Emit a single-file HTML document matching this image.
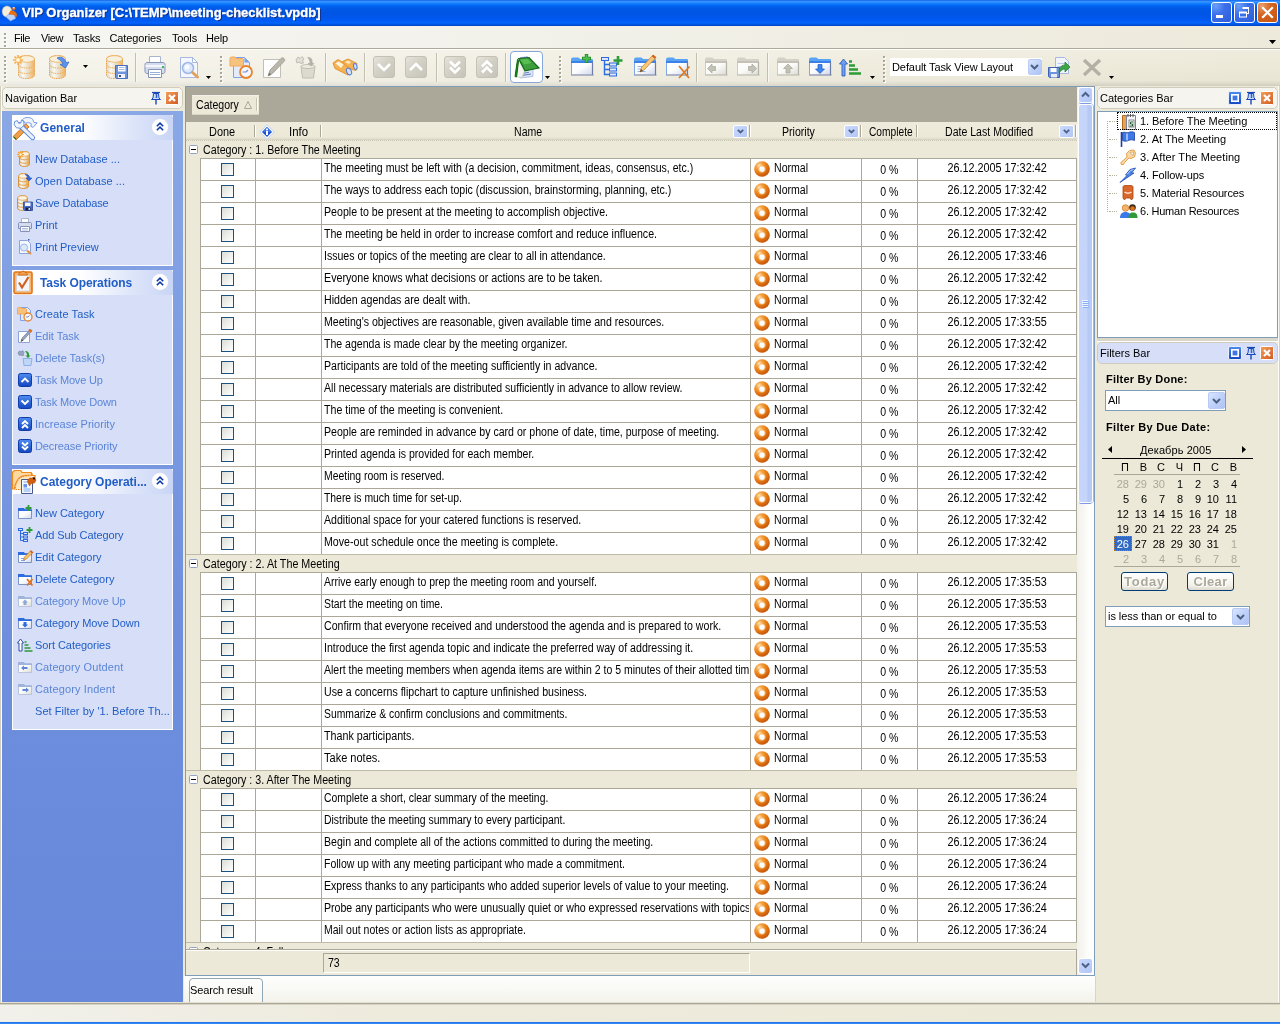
<!DOCTYPE html>
<html><head><meta charset="utf-8"><title>VIP Organizer</title>
<style>
html,body{margin:0;padding:0;}
body{width:1280px;height:1024px;overflow:hidden;position:relative;background:#ECE9D8;font-family:"Liberation Sans",sans-serif;font-size:11px;color:#000;}
*,*:before,*:after{box-sizing:border-box;}
#all{position:absolute;left:0;top:0;width:1280px;height:1024px;will-change:transform;}
.abs{position:absolute;}
svg{display:block;position:absolute;overflow:visible;}
b{font-weight:bold;}

/* ---------- title bar ---------- */
#title{position:absolute;left:0;top:0;width:1280px;height:26px;
 background:linear-gradient(to bottom,#0A5FE8 0%,#3A93FF 5%,#2B8DFF 9%,#1580FF 13%,#0470FC 18%,#0262EE 24%,#0058E6 34%,#0055E4 50%,#0056EB 68%,#005CF5 80%,#0264FB 88%,#0152DC 95%,#0044C4 100%);}
#title .cap{position:absolute;left:22px;top:5px;font-size:13px;font-weight:bold;color:#fff;text-shadow:1px 1px 0 #0A2A80;white-space:nowrap;-webkit-text-stroke:.35px #fff;}
.tbtn{position:absolute;top:2px;width:21px;height:21px;border:1px solid #fff;border-radius:3px;
 background:radial-gradient(circle at 20% 15%,#6AA0FA 0%,#3C70EA 40%,#2C5CD8 100%);}
.tbtn.close{background:radial-gradient(circle at 20% 15%,#E8A070 0%,#D4641E 40%,#C4560E 100%);}

/* ---------- menu ---------- */
#menu{position:absolute;left:0;top:26px;width:1280px;height:24px;background:linear-gradient(to right,#F6F6F4 0%,#F2F1EA 40%,#EDEADB 100%);border-bottom:1px solid #fff;}
#menu:after{content:"";position:absolute;left:0;top:22px;width:1280px;height:1px;background:#ADAA9A;}
#menu span{position:absolute;top:6px;font-size:11px;white-space:nowrap;}

/* ---------- toolbar ---------- */
#tool{position:absolute;left:0;top:50px;width:1280px;height:36px;background:linear-gradient(to right,rgba(255,255,255,.5) 0%,rgba(255,255,255,.25) 50%,rgba(255,255,255,0) 100%),linear-gradient(to bottom,#EFECDE 0%,#ECE9D8 45%,#E8E5D4 85%,#DCD9C9 93%,#D0CDBE 100%);}
.tsep{position:absolute;top:3px;width:2px;height:29px;border-left:1px solid #C2BFAF;border-right:1px solid #F8F7F2;}

/* ---------- generic panel header ---------- */
.phead{position:absolute;height:22px;font-size:11px;}
.phead span{position:absolute;left:3px;top:5px;white-space:nowrap;}

/* ---------- nav ---------- */
#nav{position:absolute;left:2px;top:111px;width:181px;height:891px;background:linear-gradient(to bottom,#8AA7E5 0%,#7E9EE3 25%,#7090DE 55%,#6A8ADC 80%,#6888DB 100%);}
.ngrp{position:absolute;left:10px;width:161px;background:#D6DFF7;border:1px solid #fff;border-top:none;}
.nhead{position:absolute;left:-1px;top:0;width:161px;height:25px;border-radius:3px 3px 0 0;background:linear-gradient(to right,#fff 0%,#fff 42%,#F2F5FD 55%,#DDE5F9 75%,#C9D5F6 100%);}
.nhead b{position:absolute;left:28px;top:6px;font-size:12px;color:#215DC6;white-space:nowrap;}
.nitem{position:absolute;left:22px;font-size:11px;color:#215DC6;white-space:nowrap;}
.nitem.dis{color:#5B84D8;}

/* ---------- grid ---------- */
#gridwrap{position:absolute;left:185px;top:86px;width:910px;height:890px;border:1px solid #7F9DB9;background:#ECE9D8;}
#gby{position:absolute;left:0;top:0;width:891px;height:35px;background:#ACA899;}
.chip{position:absolute;left:6px;top:8px;width:67px;height:20px;background:#ECE9D8;border-bottom:1px solid #D8D4C4;border-top:1px solid #F4F2E8;}
.chip:after{content:"";position:absolute;right:1px;top:2px;width:2px;height:13px;border-left:1px solid #C5C2B2;border-right:1px solid #fff;}
#ghead{position:absolute;left:0;top:35px;width:891px;height:18px;background:linear-gradient(to bottom,#EEEBDC 0,#ECE9D8 15px,#E6E3D2 16px,#DDD9C8 17px,#D6D2C1 18px);}
.hc{position:absolute;top:0;height:18px;white-space:nowrap;}
.hc:after{content:"";position:absolute;right:0;top:3px;width:2px;height:12px;border-left:1px solid #ACA899;border-right:1px solid #fff;}
.hc s,.chip s,.grow s,#gfoot s{position:absolute;text-decoration:none;font-size:12px;white-space:nowrap;transform:scaleX(.88);transform-origin:0 50%;}
#gbody{position:absolute;left:0;top:53px;width:891px;height:809px;overflow:hidden;background:#ECE9D8;}
.grow{position:absolute;left:0;width:891px;height:18px;border-top:1px solid #BFBBA9;background:#ECE9D8;}
.grow.first{border-top:1px dotted #C9C5B4;}
.grow s{left:17px;top:2px;}
.row{position:absolute;left:14px;width:877px;height:22px;border-top:1px solid #ACA899;border-left:1px solid #ACA899;border-right:1px solid #ACA899;background:#fff;}
.row .c{position:absolute;top:0;height:21px;line-height:19px;white-space:nowrap;overflow:hidden;border-left:1px solid #ACA899;}
.row:before{content:"";position:absolute;left:54px;top:0;width:1px;height:21px;background:#ACA899;}
.row s{display:inline-block;text-decoration:none;font-size:12px;transform:scaleX(.88);transform-origin:0 50%;}
.cp s,.dt s{transform-origin:50% 50%;}
.cb{position:absolute;left:20px;top:4px;width:13px;height:13px;border:1px solid #1C5180;background:linear-gradient(135deg,#DCDCD7 0%,#EEEEEA 50%,#fff 100%);}
.nm{left:120px;width:428px;padding-left:2px;}
.pr{left:549px;width:111px;padding-left:23px;}
.cp{left:660px;width:56px;text-align:center;padding-top:2px;}
.dt{left:716px;width:159px;text-align:center;}
#gfoot{position:absolute;left:0;top:862px;width:891px;height:26px;background:#ECE9D8;border-top:1px solid #ACA899;border-right:1px solid #ACA899;box-shadow:0 1px 0 #fff inset;}
#gfoot .cnt{position:absolute;left:137px;top:3px;width:427px;height:20px;border:1px solid #ACA899;border-right-color:#fff;border-bottom-color:#fff;}
#gfoot s{left:4px;top:2px;}
#vsb{position:absolute;left:891px;top:0;width:17px;height:888px;background:linear-gradient(to right,#F3F1EC 0%,#F7F6F2 35%,#FEFEFC 70%,#fff 100%);}
.sbtn{position:absolute;left:1px;width:15px;height:16px;border:1px solid #fff;border-radius:3px;background:linear-gradient(135deg,#C9D8FC 0%,#BCCEF9 55%,#B2C6F5 100%);}
.sshd{position:absolute;left:2px;width:13px;height:2px;border-bottom:1px solid #7C9BE0;border-radius:0 0 3px 3px;}
#vsb .thumb{position:absolute;left:1px;top:17px;width:15px;height:399px;border-radius:3px;border:1px solid #fff;background:linear-gradient(to right,#C6D6FB 0%,#C4D4FA 60%,#B7CAF6 68%,#B7CAF6 100%);box-shadow:1px 0 0 #9FB8EE;}
#gtabs{position:absolute;left:184px;top:976px;width:912px;height:27px;background:linear-gradient(to bottom,#FEFEFD 0%,#FAFAF7 40%,#F3F2EA 100%);border-right:1px solid #D8D5C8;overflow:hidden;}
.tab{position:absolute;left:5px;top:2px;width:74px;height:30px;border:1px solid #91A7B4;border-radius:4px 4px 0 0;background:linear-gradient(to bottom,#FDFDFC,#F6F5F0);white-space:nowrap;}
.tab span{position:absolute;left:0;top:5px;}

/* ---------- right ---------- */
#cattree{position:absolute;left:1097px;top:111px;width:181px;height:227px;background:#fff;border:1px solid #7F9DB9;}
.ct{white-space:nowrap;}
#filt{position:absolute;left:1097px;top:364px;width:182px;height:639px;}
.fcombo{background:#fff;border:1px solid #7F9DB9;}
.fcombo span{position:absolute;left:2px;top:3px;white-space:nowrap;}
.cd{width:17px;text-align:right;white-space:nowrap;}
.cd.g{color:#ACA899;}
.cd.sel{color:#fff;}
.selbox{width:18px;height:15px;background:#316AC5;border:1px dotted #C97A1A;}
.fbtn{width:47px;height:19px;border:1px solid #003C74;border-radius:3px;background:linear-gradient(to bottom,#fff,#F3F2EC 70%,#DDD9CE);font-weight:bold;font-size:13px;text-align:center;line-height:16px;padding-top:1px;color:#ACA899;text-shadow:1px 1px 0 #fff;white-space:nowrap;}

/* ---------- status ---------- */
#edge{position:absolute;left:0;top:1002px;width:1280px;height:3px;background:linear-gradient(to bottom,#E4E1D2 0,#E4E1D2 1px,#A9A696 1px,#A9A696 2px,#D6D3C4 2px,#D6D3C4 3px);}
#status{position:absolute;left:0;top:1005px;width:1280px;height:17px;background:linear-gradient(to right,#F1F0EA 0%,#EEEBDD 30%,#ECE9D8 100%);}
#desk{position:absolute;left:0;top:1022px;width:1280px;height:2px;background:linear-gradient(to bottom,#1E6AE0,#3A92FF);}

</style></head>
<body>
<div id="all">
<svg width="0" height="0" style="left:0;top:0"><defs>
<linearGradient id="gdb" x1="0" x2="1" y1="0" y2="0"><stop offset="0" stop-color="#DCD7C7"/><stop offset=".28" stop-color="#FAF8F1"/><stop offset=".55" stop-color="#E9E2CF"/><stop offset=".8" stop-color="#F1C88E"/><stop offset="1" stop-color="#EFB164"/></linearGradient>
<linearGradient id="gdbd" x1="0" x2="1" y1="0" y2="0"><stop offset="0" stop-color="#E9B56B"/><stop offset=".4" stop-color="#FBEBCF"/><stop offset="1" stop-color="#C9A870"/></linearGradient>
<linearGradient id="gblue" x1="0" x2="0" y1="0" y2="1"><stop offset="0" stop-color="#4F8DF0"/><stop offset="1" stop-color="#1346C0"/></linearGradient>
<linearGradient id="ggray" x1="0" x2="1" y1="0" y2="1"><stop offset="0" stop-color="#E6E4DC"/><stop offset=".5" stop-color="#D2D0C5"/><stop offset="1" stop-color="#C6C4B8"/></linearGradient>
<linearGradient id="gfold" x1="0" x2="1" y1="0" y2="1"><stop offset="0" stop-color="#FFFFFF"/><stop offset=".5" stop-color="#FBFCFE"/><stop offset="1" stop-color="#D0D8EC"/></linearGradient>
<linearGradient id="gfoldg" x1="0" x2="1" y1="0" y2="1"><stop offset="0" stop-color="#FFFFFF"/><stop offset=".5" stop-color="#FAFAF8"/><stop offset="1" stop-color="#DCDBD4"/></linearGradient>
<radialGradient id="gprio" cx=".33" cy=".28" r=".75"><stop offset="0" stop-color="#FFE6B4"/><stop offset=".3" stop-color="#F4A040"/><stop offset=".55" stop-color="#EC8218"/><stop offset="1" stop-color="#C4560A"/></radialGradient>
<linearGradient id="gorange" x1="0" x2="1" y1="0" y2="1"><stop offset="0" stop-color="#F2A15E"/><stop offset="1" stop-color="#D2581C"/></linearGradient>
<linearGradient id="gcb" x1="0" x2="1" y1="0" y2="1"><stop offset="0" stop-color="#DCDCD7"/><stop offset="1" stop-color="#FFFFFF"/></linearGradient>
</defs></svg><div id="title"><svg style="left:2px;top:5px" width="16" height="16" viewBox="0 0 16 16"><ellipse cx="5" cy="6.500" rx="4.800" ry="5.500" fill="#F3EEDD" stroke="#C9C4B0" stroke-width=".6"/><path d="M4 12l2-2.500h6.500l1 4-5 2.500z" fill="#BBD2FA" stroke="#7FA4E8" stroke-width=".6"/><circle cx="11.800" cy="3.500" r="1.600" fill="#E86E12"/><path d="M10.700 2.800h2.200" stroke="#fff" stroke-width=".9"/><path d="M6.500 9l2-3.500h3l3 2.500.5 3.500-2 .5-1-2.500-1.500 .5-1-1.500-1.500 1.500z" fill="#E86E12"/></svg><div class="cap" style="letter-spacing:-0.007px">VIP Organizer [C:\TEMP\meeting-checklist.vpdb]</div><div class="tbtn" style="left:1211px"><svg style="left:0px;top:0px" width="19" height="19" viewBox="0 0 19 19"><rect x="4" y="12" width="7" height="3" fill="#fff"/></svg></div><div class="tbtn" style="left:1234px"><svg style="left:0px;top:0px" width="19" height="19" viewBox="0 0 19 19"><rect x="7.500" y="4" width="6.500" height="2" fill="#fff"/><rect x="13" y="4" width="1" height="7" fill="#fff"/><rect x="12" y="10" width="2" height="1" fill="#fff"/><rect x="4.500" y="9.500" width="7" height="4.500" fill="none" stroke="#fff"/><rect x="4" y="8.500" width="8" height="2" fill="#fff"/></svg></div><div class="tbtn close" style="left:1257px"><svg style="left:0px;top:0px" width="19" height="19" viewBox="0 0 19 19"><path d="M5 5l9 9M14 5l-9 9" stroke="#fff" stroke-width="2.2" stroke-linecap="square"/></svg></div></div>
<div id="menu"><svg style="left:4px;top:7px" width="3" height="16" viewBox="0 0 3 16"><rect x="1" y="1" width="2" height="2" fill="#fff"/><rect x="0" y="0" width="2" height="2" fill="#A9A696"/><rect x="1" y="5" width="2" height="2" fill="#fff"/><rect x="0" y="4" width="2" height="2" fill="#A9A696"/><rect x="1" y="9" width="2" height="2" fill="#fff"/><rect x="0" y="8" width="2" height="2" fill="#A9A696"/><rect x="1" y="13" width="2" height="2" fill="#fff"/><rect x="0" y="12" width="2" height="2" fill="#A9A696"/></svg><span style="left:14px;letter-spacing:-0.434px">File</span><span style="left:41px;letter-spacing:-0.414px">View</span><span style="left:73px;letter-spacing:-0.145px">Tasks</span><span style="left:109.5px;letter-spacing:-0.12px">Categories</span><span style="left:172px;letter-spacing:-0.138px">Tools</span><span style="left:206px;letter-spacing:-0.156px">Help</span><svg style="left:1269px;top:14px" width="7" height="4" viewBox="0 0 7 4"><path d="M0 0h7l-3.5 4z" fill="#000"/></svg></div>
<div id="tool"><svg style="left:4px;top:6px" width="3" height="28" viewBox="0 0 3 28"><rect x="1" y="1" width="2" height="2" fill="#fff"/><rect x="0" y="0" width="2" height="2" fill="#A9A696"/><rect x="1" y="5" width="2" height="2" fill="#fff"/><rect x="0" y="4" width="2" height="2" fill="#A9A696"/><rect x="1" y="9" width="2" height="2" fill="#fff"/><rect x="0" y="8" width="2" height="2" fill="#A9A696"/><rect x="1" y="13" width="2" height="2" fill="#fff"/><rect x="0" y="12" width="2" height="2" fill="#A9A696"/><rect x="1" y="17" width="2" height="2" fill="#fff"/><rect x="0" y="16" width="2" height="2" fill="#A9A696"/><rect x="1" y="21" width="2" height="2" fill="#fff"/><rect x="0" y="20" width="2" height="2" fill="#A9A696"/><rect x="1" y="25" width="2" height="2" fill="#fff"/><rect x="0" y="24" width="2" height="2" fill="#A9A696"/></svg><div class="abs" style="left:510px;top:1px;width:33px;height:32px;border:1px solid #86A6DC;background:#fff;border-radius:4px"></div><svg style="left:514px;top:5px" width="24" height="24" viewBox="0 0 24 24"><path d="M3.500 15l13.500-2.500 2 1.500v7.500L6 23z" fill="#DCE6FA" stroke="#9FB2DC" stroke-width=".8"/><path d="M8 18.500l7-1.200M8 20.500l9-1.500" stroke="#5570B0" stroke-width=".9"/><path d="M4.500 5L10.500 16 8 22.500 3 22z" fill="#F2F2EE" stroke="#C8C4BC" stroke-width=".6"/><path d="M3.500 4.500L1 21.500l1.500 .5L4.500 6z" fill="#1E8A1E" stroke="#0A6A0A" stroke-width="1"/><path d="M4.500 3.500L15 2.500 25 13 11 15.800z" fill="#3E9E3E" stroke="#0A6A0A" stroke-width="1.100"/><path d="M6 4.500l7.500-.700 4 4.200-7 1.500z" fill="#62C456" opacity=".8"/><path d="M7 2v1.500M9 1.800v1.500M11 1.600v1.500M13 1.400v1.500" stroke="#2040A0" stroke-width=".9"/></svg><svg style="left:13px;top:5px" width="24" height="24" viewBox="0 0 24 24"><g transform="translate(5 0) scale(1.0)"><path d="M.5 4C.5 2 4 .5 8.500 .5s8 1.500 8 3.500V20c0 2-3.500 3.500-8 3.500S.5 22 .5 20z" fill="url(#gdb)" stroke="#E9A550" stroke-width="1" stroke-dasharray="1.500 .7"/><ellipse cx="8.500" cy="4" rx="8" ry="3.300" fill="#F7F0DF" stroke="#EDB060" stroke-width=".8"/><path d="M.5 9.500c0 2 3.500 3.500 8 3.500s8-1.500 8-3.500M.5 15c0 2 3.500 3.500 8 3.500s8-1.500 8-3.500" fill="none" stroke="#EDB060" stroke-width="1" stroke-dasharray="1.500 .7"/></g><path d="M5 0v10M0 5h10M1.500 1.500l7 7M8.500 1.500l-7 7" stroke="#F8B050" stroke-width="1.700"/><circle cx="5" cy="5" r="2" fill="#FFF6DC"/></svg><svg style="left:45px;top:5px" width="24" height="24" viewBox="0 0 24 24"><g transform="translate(4 0) scale(1.0)"><path d="M.5 4C.5 2 4 .5 8.500 .5s8 1.500 8 3.500V20c0 2-3.500 3.500-8 3.500S.5 22 .5 20z" fill="url(#gdb)" stroke="#E9A550" stroke-width="1" stroke-dasharray="1.500 .7"/><ellipse cx="8.500" cy="4" rx="8" ry="3.300" fill="#F7F0DF" stroke="#EDB060" stroke-width=".8"/><path d="M.5 9.500c0 2 3.500 3.500 8 3.500s8-1.500 8-3.500M.5 15c0 2 3.500 3.500 8 3.500s8-1.500 8-3.500" fill="none" stroke="#EDB060" stroke-width="1" stroke-dasharray="1.500 .7"/></g><path d="M12 3c4-2 8 0 9 4.500l3-.500-3.500 6-5.500-3.500 3-.5c-.8-2.500-3-4-6-6z" fill="#5B93EA" stroke="#3468C8" stroke-width=".7"/></svg><svg style="left:103px;top:5px" width="24" height="24" viewBox="0 0 24 24"><g transform="translate(3 0) scale(1.0)"><path d="M.5 4C.5 2 4 .5 8.500 .5s8 1.500 8 3.500V20c0 2-3.500 3.500-8 3.500S.5 22 .5 20z" fill="url(#gdb)" stroke="#E9A550" stroke-width="1" stroke-dasharray="1.500 .7"/><ellipse cx="8.500" cy="4" rx="8" ry="3.300" fill="#F7F0DF" stroke="#EDB060" stroke-width=".8"/><path d="M.5 9.500c0 2 3.500 3.500 8 3.500s8-1.500 8-3.500M.5 15c0 2 3.500 3.500 8 3.500s8-1.500 8-3.500" fill="none" stroke="#EDB060" stroke-width="1" stroke-dasharray="1.500 .7"/></g><path d="M12.500 10.500h12v13h-11l-1-1z" fill="#7094DC" stroke="#4A6CBC"/><rect x="15" y="11" width="7.500" height="5.500" fill="#fff"/><path d="M16 12.500h5.500M16 14.500h5.500" stroke="#A9BCE6"/><rect x="15" y="19" width="7" height="4" fill="#F2F4FA"/><rect x="16" y="20" width="2" height="2" fill="#3D4F84"/></svg><svg style="left:143px;top:5px" width="24" height="24" viewBox="0 0 24 24"><path d="M6.500 1.500h11v7h-11z" fill="#fff" stroke="#A9B4CF"/><path d="M2 9.500c0-1 1-2 2-2h16c1 0 2 1 2 2v7c0 1-1 2-2 2H4c-1 0-2-1-2-2z" fill="#D5DCEE" stroke="#8593B8"/><path d="M2.500 11h19" stroke="#F4F6FB" stroke-width="2"/><path d="M5.500 14.500h13v8h-13z" fill="#fff" stroke="#8593B8"/><path d="M7 17.500h10M7 19.500h10" stroke="#9DB0DC"/><rect x="19" y="11" width="2" height="2" fill="#3FB44A"/></svg><svg style="left:177px;top:5px" width="24" height="24" viewBox="0 0 24 24"><path d="M3.500 2.500h12l5 5v15h-17z" fill="#F4F7FE" stroke="#A9B8E0"/><path d="M15.500 2.500v5h5z" fill="#fff" stroke="#A9B8E0"/><circle cx="11" cy="13" r="5.500" fill="#DCE9FB" stroke="#9DB6E6" stroke-width="1.500"/><circle cx="10" cy="12" r="2.500" fill="#F8FBFF"/><path d="M15.500 17.500l5 4.500" stroke="#E0A060" stroke-width="3" stroke-linecap="round"/></svg><svg style="left:229px;top:5px" width="24" height="24" viewBox="0 0 24 24"><path d="M4.500 2.500h11l5 5v15h-16z" fill="#E4ECFC" stroke="#7FA2E6"/><path d="M15.500 2.500v5h5z" fill="#7FA2E6"/><path d="M1 3.500c0-1 .5-1.500 1.500-1.500H6l1.500 1.500H13c1 0 1.500.5 1.500 1.500v6H1z" fill="#F7C27E" stroke="#F0A95A"/><circle cx="17" cy="17" r="6" fill="#F4F7FF" stroke="#E8842A" stroke-width="1.800"/><path d="M17 17h-3.500M17 17l2-2" stroke="#7A8FC0" stroke-width="1.200"/></svg><svg style="left:262px;top:5px" width="24" height="24" viewBox="0 0 24 24"><path d="M1.500 4.500h17v18h-17z" fill="#fff" stroke="#C2C0B6"/><path d="M6 21l2-6L19 3.500c1-1 2-1 3 0s1 2 0 3L11 18z" fill="#B9B7AB" stroke="#9E9C90" stroke-width=".8"/><path d="M6 21l1.200-3.500 2.300 2.300z" fill="#77756B"/></svg><svg style="left:294px;top:5px" width="24" height="24" viewBox="0 0 24 24"><path d="M7 11.500h14l-1.500 11.500h-11z" fill="#DCDAD0" stroke="#C0BEB2"/><ellipse cx="14" cy="11.500" rx="7" ry="2" fill="#ECEAE2" stroke="#C0BEB2"/><path d="M13 2c4-.5 6 2.500 5.500 6h2l-3.500 3.500-3.500-3.500h2c.3-2.200-.7-4-2.500-6z" fill="#B5B3A8"/><path d="M2 5l2-3 2 1.500 2-2 2 2.500-1.500 2 1 2-3 .5-1-1.500-2.500 1z" fill="#E2E0D8" stroke="#B5B3A8" stroke-width=".8"/></svg><svg style="left:333px;top:5px" width="24" height="24" viewBox="0 0 24 24"><path d="M0 8l5-3.500 13.500 8-3.500 7.500L2 13.500z" fill="#F5B252" stroke="#E08E28" stroke-width=".9"/><path d="M2.500 8.500l3-2 5 3-2.500 3.500z" fill="#FFF3DC"/><path d="M9.500 6.500l5.500-2.500 9 4.500-1 7-4-1-6.500-4z" fill="#F5B252" stroke="#E08E28" stroke-width=".9"/><path d="M12 7l3-1.500 3 1.500-2 2z" fill="#FFE9C4"/><ellipse cx="16" cy="16.500" rx="2.300" ry="3.500" transform="rotate(-25 16 16.500)" fill="#D5E2FA" stroke="#5C82D4" stroke-width="1.100"/><ellipse cx="22.300" cy="11.500" rx="1.700" ry="3" transform="rotate(-15 22.300 11.500)" fill="#D5E2FA" stroke="#5C82D4" stroke-width="1.100"/></svg><svg style="left:372px;top:5px" width="24" height="24" viewBox="0 0 24 24"><rect x="1.500" y="1.500" width="21" height="21" rx="2.500" fill="url(#ggray)" stroke="#C4C2B5"/><path d="M6 9l6 6 6-6" fill="none" stroke="#fff" stroke-width="2.600"/></svg><svg style="left:404px;top:5px" width="24" height="24" viewBox="0 0 24 24"><rect x="1.500" y="1.500" width="21" height="21" rx="2.500" fill="url(#ggray)" stroke="#C4C2B5"/><path d="M6 15l6-6 6 6" fill="none" stroke="#fff" stroke-width="2.600"/></svg><svg style="left:443px;top:5px" width="24" height="24" viewBox="0 0 24 24"><rect x="1.500" y="1.500" width="21" height="21" rx="2.500" fill="url(#ggray)" stroke="#C4C2B5"/><path d="M7 6.500l5 5 5-5M7 12.500l5 5 5-5" fill="none" stroke="#fff" stroke-width="2.600"/></svg><svg style="left:475px;top:5px" width="24" height="24" viewBox="0 0 24 24"><rect x="1.500" y="1.500" width="21" height="21" rx="2.500" fill="url(#ggray)" stroke="#C4C2B5"/><path d="M7 11.500l5-5 5 5M7 17.500l5-5 5 5" fill="none" stroke="#fff" stroke-width="2.600"/></svg><svg style="left:570px;top:4px" width="24" height="24" viewBox="0 0 24 24"><path d="M1.500 7.500h21v13h-21z" fill="url(#gfold)"/><path d="M1 5.500q0-2 2-2h5q1.500 0 2 1.500h12q1 0 1 1v3H1z" fill="#5AA4F6"/><path d="M1 7h22v2H1z" fill="#3A80E6"/><path d="M1.500 9v11.500" stroke="#7FA8EC"/><path d="M1 21h22.500M22.500 8v13" stroke="#6F7CA6" stroke-width="1.200" fill="none"/><path d="M16.500 0v9M12 4.500h9" stroke="#1E8A2A" stroke-width="3.400"/><path d="M16.500 .8v7.400M12.800 4.500h7.400" stroke="#52C050" stroke-width="1.800"/></svg><svg style="left:600px;top:5px" width="24" height="24" viewBox="0 0 24 24"><path d="M4.500 5v14.500h5M4.500 9.500h5M4.500 14.500h5" fill="none" stroke="#2F6BE0" stroke-width="1.400"/><rect x="1.500" y="2.500" width="7" height="3" fill="#DCE6FA" stroke="#2F6BE0"/><rect x="9.500" y="8" width="7" height="3" fill="#DCE6FA" stroke="#2F6BE0"/><rect x="9.500" y="13" width="7" height="3" fill="#DCE6FA" stroke="#2F6BE0"/><rect x="9.500" y="18" width="7" height="3" fill="#DCE6FA" stroke="#2F6BE0"/><path d="M18 1v9M13.500 5.500h9" stroke="#2E9B38" stroke-width="2.600"/></svg><svg style="left:633px;top:4px" width="24" height="24" viewBox="0 0 24 24"><path d="M1.500 7.500h21v13h-21z" fill="url(#gfold)"/><path d="M1 5.500q0-2 2-2h5q1.500 0 2 1.500h12q1 0 1 1v3H1z" fill="#5AA4F6"/><path d="M1 7h22v2H1z" fill="#3A80E6"/><path d="M1.500 9v11.500" stroke="#7FA8EC"/><path d="M1 21h22.500M22.500 8v13" stroke="#6F7CA6" stroke-width="1.200" fill="none"/><path d="M4.500 12.500h9M4.500 15h7M4.500 17.500h8" stroke="#8FB4F0"/><path d="M7 18l1.500-4.500L20 1l3 2.500L10.500 16.500z" fill="#F6C878" stroke="#C8822E" stroke-width=".8"/><path d="M7 18l1-3 2 2z" fill="#5A4A3A"/><path d="M19.500 1.500l3 2.500" stroke="#D2601C" stroke-width="2.200"/></svg><svg style="left:665px;top:4px" width="24" height="24" viewBox="0 0 24 24"><path d="M1.500 7.500h21v13h-21z" fill="url(#gfold)"/><path d="M1 5.500q0-2 2-2h5q1.500 0 2 1.500h12q1 0 1 1v3H1z" fill="#5AA4F6"/><path d="M1 7h22v2H1z" fill="#3A80E6"/><path d="M1.500 9v11.500" stroke="#7FA8EC"/><path d="M1 21h22.500M22.500 8v13" stroke="#6F7CA6" stroke-width="1.200" fill="none"/><path d="M14 12l10 12M24.500 12.500L14 24" stroke="#E07A20" stroke-width="1.700"/></svg><svg style="left:704px;top:4px" width="24" height="24" viewBox="0 0 24 24"><path d="M1.500 7.500h21v13h-21z" fill="url(#gfoldg)"/><path d="M1 5.500q0-2 2-2h5q1.500 0 2 1.500h12q1 0 1 1v3H1z" fill="#D4D2C8"/><path d="M1 7h22v2H1z" fill="#C4C2B6"/><path d="M1.500 9v11.500" stroke="#CFCDC2"/><path d="M1 21h22.500M22.500 8v13" stroke="#B4B2A6" stroke-width="1.200" fill="none"/><path d="M3.500 14.500l4.500-4.500v2.500h3.500v4H8V19z" fill="#C4C2B6" stroke="#A8A69A" stroke-width=".7"/></svg><svg style="left:736px;top:4px" width="24" height="24" viewBox="0 0 24 24"><path d="M1.500 7.500h21v13h-21z" fill="url(#gfoldg)"/><path d="M1 5.500q0-2 2-2h5q1.500 0 2 1.500h12q1 0 1 1v3H1z" fill="#D4D2C8"/><path d="M1 7h22v2H1z" fill="#C4C2B6"/><path d="M1.500 9v11.500" stroke="#CFCDC2"/><path d="M1 21h22.500M22.500 8v13" stroke="#B4B2A6" stroke-width="1.200" fill="none"/><path d="M20.500 14.500L16 10v2.500h-3.500v4H16V19z" fill="#C4C2B6" stroke="#A8A69A" stroke-width=".7"/></svg><svg style="left:776px;top:4px" width="24" height="24" viewBox="0 0 24 24"><path d="M1.500 7.500h21v13h-21z" fill="url(#gfoldg)"/><path d="M1 5.500q0-2 2-2h5q1.500 0 2 1.500h12q1 0 1 1v3H1z" fill="#D4D2C8"/><path d="M1 7h22v2H1z" fill="#C4C2B6"/><path d="M1.500 9v11.500" stroke="#CFCDC2"/><path d="M1 21h22.500M22.500 8v13" stroke="#B4B2A6" stroke-width="1.200" fill="none"/><path d="M12 10l4.500 4.500H14V19h-4v-4.500H7.500z" fill="#C4C2B6" stroke="#A8A69A" stroke-width=".7"/></svg><svg style="left:808px;top:4px" width="24" height="24" viewBox="0 0 24 24"><path d="M1.500 7.500h21v13h-21z" fill="url(#gfold)"/><path d="M1 5.500q0-2 2-2h5q1.500 0 2 1.500h12q1 0 1 1v3H1z" fill="#5AA4F6"/><path d="M1 7h22v2H1z" fill="#3A80E6"/><path d="M1.500 9v11.500" stroke="#7FA8EC"/><path d="M1 21h22.500M22.500 8v13" stroke="#6F7CA6" stroke-width="1.200" fill="none"/><path d="M12 19.500l4.500-4.500H14V10.500h-4V15H7.500z" fill="#3F86EC" stroke="#1E58C0" stroke-width=".7"/></svg><svg style="left:838px;top:5px" width="24" height="24" viewBox="0 0 24 24"><path d="M5.500 4l4 5H7v12H4V9H1.500z" fill="#6FA0EE" stroke="#2F5FC0" stroke-width=".9"/><path d="M11 6.500h3M11 10.500h6M11 14.500h9M11 18.500h12" stroke="#2E9B38" stroke-width="2.400"/></svg><svg style="left:1047px;top:5px" width="24" height="24" viewBox="0 0 24 24"><path d="M8.500 2.500h9l4 4v12h-13z" fill="#F1F4FC" stroke="#A9B8E0"/><path d="M10.500 8.500h8M10.500 11.500h8" stroke="#B9C7EA"/><path d="M1.500 12.500h11v10h-10l-1-1z" fill="#6F93DC" stroke="#3D61B4"/><rect x="3.500" y="13" width="6" height="4" fill="#fff"/><rect x="4" y="19" width="6" height="3.500" fill="#E8ECF6"/><path d="M12 18c0-5 2-8 6-8V7l5 5-5 5v-3c-2.500 0-4 1.500-6 4z" fill="#3DA548" stroke="#1E7A2A" stroke-width=".7"/></svg><svg style="left:1080px;top:5px" width="24" height="24" viewBox="0 0 24 24"><path d="M4 5l16 15M20 5L4 20" stroke="#B3B1A6" stroke-width="3.400"/></svg><div class="tsep" style="left:135px"></div><div class="tsep" style="left:325px"></div><div class="tsep" style="left:364px"></div><div class="tsep" style="left:436px"></div><div class="tsep" style="left:505px"></div><div class="tsep" style="left:696px"></div><div class="tsep" style="left:767px"></div><svg style="left:83px;top:15px" width="5" height="3" viewBox="0 0 5 3"><path d="M0 0h5l-2.5 3z" fill="#000"/></svg><svg style="left:206px;top:26px" width="5" height="3" viewBox="0 0 5 3"><path d="M0 0h5l-2.5 3z" fill="#000"/></svg><svg style="left:545px;top:26px" width="5" height="3" viewBox="0 0 5 3"><path d="M0 0h5l-2.5 3z" fill="#000"/></svg><svg style="left:870px;top:26px" width="5" height="3" viewBox="0 0 5 3"><path d="M0 0h5l-2.5 3z" fill="#000"/></svg><svg style="left:1109px;top:26px" width="5" height="3" viewBox="0 0 5 3"><path d="M0 0h5l-2.5 3z" fill="#000"/></svg><svg style="left:559px;top:6px" width="3" height="28" viewBox="0 0 3 28"><rect x="1" y="1" width="2" height="2" fill="#fff"/><rect x="0" y="0" width="2" height="2" fill="#A9A696"/><rect x="1" y="5" width="2" height="2" fill="#fff"/><rect x="0" y="4" width="2" height="2" fill="#A9A696"/><rect x="1" y="9" width="2" height="2" fill="#fff"/><rect x="0" y="8" width="2" height="2" fill="#A9A696"/><rect x="1" y="13" width="2" height="2" fill="#fff"/><rect x="0" y="12" width="2" height="2" fill="#A9A696"/><rect x="1" y="17" width="2" height="2" fill="#fff"/><rect x="0" y="16" width="2" height="2" fill="#A9A696"/><rect x="1" y="21" width="2" height="2" fill="#fff"/><rect x="0" y="20" width="2" height="2" fill="#A9A696"/><rect x="1" y="25" width="2" height="2" fill="#fff"/><rect x="0" y="24" width="2" height="2" fill="#A9A696"/></svg><svg style="left:883px;top:6px" width="3" height="28" viewBox="0 0 3 28"><rect x="1" y="1" width="2" height="2" fill="#fff"/><rect x="0" y="0" width="2" height="2" fill="#A9A696"/><rect x="1" y="5" width="2" height="2" fill="#fff"/><rect x="0" y="4" width="2" height="2" fill="#A9A696"/><rect x="1" y="9" width="2" height="2" fill="#fff"/><rect x="0" y="8" width="2" height="2" fill="#A9A696"/><rect x="1" y="13" width="2" height="2" fill="#fff"/><rect x="0" y="12" width="2" height="2" fill="#A9A696"/><rect x="1" y="17" width="2" height="2" fill="#fff"/><rect x="0" y="16" width="2" height="2" fill="#A9A696"/><rect x="1" y="21" width="2" height="2" fill="#fff"/><rect x="0" y="20" width="2" height="2" fill="#A9A696"/><rect x="1" y="25" width="2" height="2" fill="#fff"/><rect x="0" y="24" width="2" height="2" fill="#A9A696"/></svg><svg style="left:220px;top:6px" width="3" height="28" viewBox="0 0 3 28"><rect x="1" y="1" width="2" height="2" fill="#fff"/><rect x="0" y="0" width="2" height="2" fill="#A9A696"/><rect x="1" y="5" width="2" height="2" fill="#fff"/><rect x="0" y="4" width="2" height="2" fill="#A9A696"/><rect x="1" y="9" width="2" height="2" fill="#fff"/><rect x="0" y="8" width="2" height="2" fill="#A9A696"/><rect x="1" y="13" width="2" height="2" fill="#fff"/><rect x="0" y="12" width="2" height="2" fill="#A9A696"/><rect x="1" y="17" width="2" height="2" fill="#fff"/><rect x="0" y="16" width="2" height="2" fill="#A9A696"/><rect x="1" y="21" width="2" height="2" fill="#fff"/><rect x="0" y="20" width="2" height="2" fill="#A9A696"/><rect x="1" y="25" width="2" height="2" fill="#fff"/><rect x="0" y="24" width="2" height="2" fill="#A9A696"/></svg><div class="abs" style="left:890px;top:8px;width:152px;height:18px;background:#fff;"></div><div class="abs" style="left:892px;top:11px;white-space:nowrap;letter-spacing:-0.089px">Default Task View Layout</div><div class="abs" style="left:1028px;top:9px;width:14px;height:16px;border-radius:2px;border:1px solid #B7CBF5;background:linear-gradient(135deg,#D9E4FD 0%,#C0D2FA 50%,#AEC3F4 100%)"><svg style="left:1px;top:4px" width="9" height="6" viewBox="0 0 9 6"><path d="M1 1l3.5 3.5L8 1" fill="none" stroke="#4D6185" stroke-width="2"/></svg></div></div>
<div class="phead" style="left:2px;top:87px;width:181px"><svg style="left:0px;top:0px" width="181" height="22" viewBox="0 0 181 22"><polygon points="3.5,.5 177.5,.5 180.5,3.5 180.5,18.5 177.5,21.5 3.5,21.5 .5,18.5 .5,3.5" fill="#F5F4EF" stroke="#CFCCBD"/></svg><span>Navigation Bar</span><svg style="left:163px;top:3px" width="16" height="16" viewBox="0 0 16 16"><rect x=".5" y="1.500" width="13" height="13" rx="1" fill="url(#gorange)" stroke="#fff"/><path d="M4 5l6 6M10 5l-6 6" stroke="#fff" stroke-width="2.200"/></svg><svg style="left:147px;top:3px" width="16" height="16" viewBox="0 0 16 16"><path d="M4.500 3.500h5l.5 4.500 1.500 1.500h-9L4 8z" fill="#C9DAF8" stroke="#1846B8" stroke-width="1"/><path d="M3 2.500h8" stroke="#1846B8" stroke-width="1.200"/><path d="M7 10v4.500" stroke="#1846B8" stroke-width="1.400"/><path d="M7.500 4v4" stroke="#2F5FD0" stroke-width="1.500"/></svg></div><div id="nav"><div class="ngrp" style="top:4px;height:151px"><div class="nhead"><b style="letter-spacing:0.042px">General</b><svg style="left:138px;top:2px" width="20" height="20" viewBox="0 0 20 20"><circle cx="10" cy="10" r="8.300" fill="#fff" stroke="#D4DCF0" stroke-width="1" stroke-dasharray="1 1"/><path d="M6.800 9.300L10 6.100l3.200 3.200M6.800 13.300L10 10.100l3.200 3.200" fill="none" stroke="#0A36A8" stroke-width="1.500"/></svg></div><svg style="left:-3px;top:-5px" width="32" height="32" viewBox="0 0 32 32"><g transform="translate(1.500 2.500) scale(.9)"><path d="M2 26.500L16 12.500l3.500 3.500L5.500 30z" fill="#F0A04A" stroke="#D06A10" stroke-width="1"/><path d="M2.300 27l3 3" stroke="#1A6A1A" stroke-width="1.300"/><path d="M12 8c2.500-3 8-3.500 11.500-.5l1.500 3.500 3.500 .5-4.500 5-2.500-1 .5-3c-2-1.500-4-1.500-6.500-.5z" fill="#EEF3FC" stroke="#6A92E0" stroke-width="1"/><path d="M8.500 13.500l15 14.500" stroke="#5A86DC" stroke-width="5.500" stroke-linecap="round"/><path d="M8.500 13.500l15 14.500" stroke="#EAF0FD" stroke-width="3.500" stroke-linecap="round"/><path d="M3.500 10l3-1 1.500 3 2.500-.5.500-3 2.500 1 .5 4.500-3.500 3.500-5-.5-2.500-3.500z" fill="#F2F6FE" stroke="#5A86DC" stroke-width="1"/></g></svg><svg style="left:4px;top:36px" width="16" height="16" viewBox="0 0 16 16"><g transform="translate(2 0)"><path d="M.5 3C.5 1.500 3 .5 5.500 .5s5 1 5 2.500V13c0 1.500-2.500 2.500-5 2.500S.5 14.500 .5 13z" fill="url(#gdb)" stroke="#D8923A" stroke-width="1"/><ellipse cx="5.500" cy="3" rx="4.800" ry="2.200" fill="#FBF4E2" stroke="#E0A04C" stroke-width=".7"/><path d="M.5 6.500c0 1.400 2.500 2.300 5 2.300s5-.9 5-2.300M.5 10c0 1.400 2.500 2.300 5 2.300s5-.9 5-2.300" fill="none" stroke="#DC9840" stroke-width=".9"/><path d="M8 4.500v10.500l2.200-1.200V3.500z" fill="#F0A850" opacity=".55"/></g><path d="M3.500 0v7M0 3.500h7M1 1l5 5M6 1L1 6" stroke="#F6A030" stroke-width="1.100"/><circle cx="3.500" cy="3.500" r="1.200" fill="#FFF4D0"/></svg><div class="nitem" style="top:38px;letter-spacing:0.039px">New Database ...</div><svg style="left:4px;top:58px" width="16" height="16" viewBox="0 0 16 16"><g transform="translate(1 0)"><path d="M.5 3C.5 1.500 3 .5 5.500 .5s5 1 5 2.500V13c0 1.500-2.500 2.500-5 2.500S.5 14.500 .5 13z" fill="url(#gdb)" stroke="#D8923A" stroke-width="1"/><ellipse cx="5.500" cy="3" rx="4.800" ry="2.200" fill="#FBF4E2" stroke="#E0A04C" stroke-width=".7"/><path d="M.5 6.500c0 1.400 2.500 2.300 5 2.300s5-.9 5-2.300M.5 10c0 1.400 2.500 2.300 5 2.300s5-.9 5-2.300" fill="none" stroke="#DC9840" stroke-width=".9"/><path d="M8 4.500v10.500l2.200-1.200V3.500z" fill="#F0A850" opacity=".55"/></g><path d="M8 1.500c2.500-.5 4.500 1 5 3.500h2l-3 3-3-3h2c-.4-1.300-1.500-2.500-3-3.500z" fill="#2F66DC" stroke="#1A48B8" stroke-width=".5"/></svg><div class="nitem" style="top:60px;letter-spacing:0.042px">Open Database ...</div><svg style="left:4px;top:80px" width="16" height="16" viewBox="0 0 16 16"><g transform="translate(0 0)"><path d="M.5 3C.5 1.500 3 .5 5.500 .5s5 1 5 2.500V13c0 1.500-2.500 2.500-5 2.500S.5 14.500 .5 13z" fill="url(#gdb)" stroke="#D8923A" stroke-width="1"/><ellipse cx="5.500" cy="3" rx="4.800" ry="2.200" fill="#FBF4E2" stroke="#E0A04C" stroke-width=".7"/><path d="M.5 6.500c0 1.400 2.500 2.300 5 2.300s5-.9 5-2.300M.5 10c0 1.400 2.500 2.300 5 2.300s5-.9 5-2.300" fill="none" stroke="#DC9840" stroke-width=".9"/><path d="M8 4.500v10.500l2.200-1.200V3.500z" fill="#F0A850" opacity=".55"/></g><path d="M6.500 7h9v8.500h-8l-1-1z" fill="#4A6CC4" stroke="#2C4A9C" stroke-width=".8"/><rect x="8" y="7.500" width="5.500" height="3.500" fill="#F4F7FF"/><rect x="8.500" y="12.500" width="5" height="3" fill="#10204A"/><rect x="11.500" y="13" width="1.500" height="2" fill="#DCE4F8"/></svg><div class="nitem" style="top:82px;letter-spacing:-0.132px">Save Database</div><svg style="left:4px;top:102px" width="16" height="16" viewBox="0 0 16 16"><path d="M4.500 1.500h7v4h-7z" fill="#fff" stroke="#A9B4CF"/><path d="M1.500 6.500c0-.5.500-1 1-1h11c.5 0 1 .5 1 1v5h-13z" fill="#D5DCEE" stroke="#8593B8"/><path d="M3.500 9.500h9v5h-9z" fill="#fff" stroke="#8593B8"/><path d="M5 11.500h6M5 13h6" stroke="#9DB0DC" stroke-width=".8"/></svg><div class="nitem" style="top:104px;letter-spacing:-0.005px">Print</div><svg style="left:4px;top:124px" width="16" height="16" viewBox="0 0 16 16"><path d="M2.500 1.500h8l3 3v10h-11z" fill="#F4F7FE" stroke="#8FA3D6"/><circle cx="7" cy="8.500" r="3.500" fill="#DCE9FB" stroke="#9DB6E6"/><path d="M10 11.500l4 3.500" stroke="#E09040" stroke-width="2"/><rect x="11" y="0" width="1.500" height="1.500" fill="#3D61B4"/></svg><div class="nitem" style="top:126px;letter-spacing:-0.1px">Print Preview</div></div><div class="ngrp" style="top:159px;height:195px"><div class="nhead"><b style="letter-spacing:-0.076px">Task Operations</b><svg style="left:138px;top:2px" width="20" height="20" viewBox="0 0 20 20"><circle cx="10" cy="10" r="8.300" fill="#fff" stroke="#D4DCF0" stroke-width="1" stroke-dasharray="1 1"/><path d="M6.800 9.300L10 6.100l3.200 3.200M6.800 13.300L10 10.100l3.200 3.200" fill="none" stroke="#0A36A8" stroke-width="1.500"/></svg></div><svg style="left:-3px;top:-5px" width="32" height="32" viewBox="0 0 32 32"><rect x="4" y="7" width="18" height="21.500" rx="1.500" fill="#F7B86C" stroke="#E0761E" stroke-width="1.600"/><rect x="6.500" y="10.500" width="13" height="15.500" fill="#F4F6FC" stroke="#C8CCDC" stroke-width=".6"/><path d="M8.500 10l1-2.500h1.500l1-1.300h2l1 1.300h1.500l1 2.500z" fill="#F2A050" stroke="#D06A10" stroke-width=".9"/><path d="M9 17.500l3 5 6.500-10.500" fill="none" stroke="#D2601C" stroke-width="2.200"/></svg><svg style="left:4px;top:36px" width="16" height="16" viewBox="0 0 16 16"><path d="M3.500 1.500h7l3 3v10h-10z" fill="#E4ECFC" stroke="#7FA2E6"/><path d="M.5 2.500c0-.5.500-1 1-1H4l1 1h3.500c.5 0 1 .5 1 1V8H.5z" fill="#F7C27E" stroke="#F0A95A"/><circle cx="11" cy="11" r="4" fill="#F4F7FF" stroke="#E8842A" stroke-width="1.300"/><path d="M11 11H9M11 11l1.500-1.500" stroke="#7A8FC0"/></svg><div class="nitem" style="top:38px;letter-spacing:0.1px">Create Task</div><svg style="left:4px;top:58px" width="16" height="16" viewBox="0 0 16 16"><path d="M1.500 3.500h11v11h-11z" fill="#fff" stroke="#8FA3D6"/><path d="M4 13.500l1.200-3.500 7-7.500c.8-.8 2-.8 2.800 0l-8 9z" fill="#9AA6C0" stroke="#6A7898" stroke-width=".7"/><path d="M12 1.500l2.500 2.500" stroke="#E2701A" stroke-width="2.200"/><path d="M4 13.500l.8-2.200 1.500 1.500z" fill="#443"/></svg><div class="nitem dis" style="top:60px;letter-spacing:-0.015px">Edit Task</div><svg style="left:4px;top:80px" width="16" height="16" viewBox="0 0 16 16"><path d="M6 8.500h9l-1 7H7z" fill="#BFD6F6" stroke="#8FB0E6"/><path d="M8 1c3 0 4.500 2 4 4.500h1.500L11 8 8.500 5.500H10c.2-1.500-.5-3-2-4.500z" fill="#2E9B38"/><path d="M1 3l1.500-2L4 2l1.500-1.500L7 2.500l-1 1.500.7 1.300-2 .4-.7-1-1.700.7z" fill="#9AA6C0" stroke="#6A7898" stroke-width=".6"/></svg><div class="nitem dis" style="top:82px;letter-spacing:-0.008px">Delete Task(s)</div><svg style="left:4px;top:102px" width="16" height="16" viewBox="0 0 16 16"><rect x="1.500" y="1.500" width="13" height="13" rx="2" fill="url(#gblue)" stroke="#0F3CA8"/><path d="M4.500 10L8 6.500l3.500 3.500" fill="none" stroke="#fff" stroke-width="1.900"/></svg><div class="nitem dis" style="top:104px;letter-spacing:-0.159px">Task Move Up</div><svg style="left:4px;top:124px" width="16" height="16" viewBox="0 0 16 16"><rect x="1.500" y="1.500" width="13" height="13" rx="2" fill="url(#gblue)" stroke="#0F3CA8"/><path d="M4.500 6.500L8 10l3.500-3.500" fill="none" stroke="#fff" stroke-width="1.900"/></svg><div class="nitem dis" style="top:126px;letter-spacing:-0.14px">Task Move Down</div><svg style="left:4px;top:146px" width="16" height="16" viewBox="0 0 16 16"><rect x="1.500" y="1.500" width="13" height="13" rx="2" fill="url(#gblue)" stroke="#0F3CA8"/><path d="M5 8l3-3 3 3M5 12l3-3 3 3" fill="none" stroke="#fff" stroke-width="1.900"/></svg><div class="nitem dis" style="top:148px;letter-spacing:0.03px">Increase Priority</div><svg style="left:4px;top:168px" width="16" height="16" viewBox="0 0 16 16"><rect x="1.500" y="1.500" width="13" height="13" rx="2" fill="url(#gblue)" stroke="#0F3CA8"/><path d="M5 4.500l3 3 3-3M5 8.500l3 3 3-3" fill="none" stroke="#fff" stroke-width="1.900"/></svg><div class="nitem dis" style="top:170px;letter-spacing:-0.109px">Decrease Priority</div></div><div class="ngrp" style="top:358px;height:261px"><div class="nhead"><b style="letter-spacing:-0.03px">Category Operati...</b><svg style="left:138px;top:2px" width="20" height="20" viewBox="0 0 20 20"><circle cx="10" cy="10" r="8.300" fill="#fff" stroke="#D4DCF0" stroke-width="1" stroke-dasharray="1 1"/><path d="M6.800 9.300L10 6.100l3.200 3.200M6.800 13.300L10 10.100l3.200 3.200" fill="none" stroke="#0A36A8" stroke-width="1.500"/></svg></div><svg style="left:-3px;top:-5px" width="32" height="32" viewBox="0 0 32 32"><path d="M2.500 8.500l2-2h6l1.500 2h9l1 1.500v1.500h3v6" fill="none" stroke="#F08A1E" stroke-width="1.200"/><path d="M2.500 8.500l2-2h6l1.500 2h9l1 2.500c-8 .5-12 1-14.500 5s-3 6-3 9h-2z" fill="#FDD9A0" stroke="#F08A1E" stroke-width="1.200"/><path d="M22 11.500c-8 .5-11.500 1-14 5s-2.500 5.500-2.500 9h7" fill="#FEE6BE" stroke="#F08A1E" stroke-width="1" stroke-dasharray="1.500 1"/><path d="M11.500 15.500h11v14h-11z" fill="#F4F8FF" stroke="#4A5A8A" stroke-width="1"/><path d="M13.500 18h6M13.500 25h7M13.500 27h7" stroke="#7FA8EC"/><rect x="13.500" y="20" width="3.500" height="3.500" fill="#6A94E4"/><path d="M17.500 17.500c0-2 2-4 4-3.500l2.500-1 2 3-1.500 3-3.500 .5-1.500 2.500z" fill="#D2600E" stroke="#B84E06" stroke-width=".6"/><circle cx="24" cy="14.500" r="1" fill="#000"/></svg><svg style="left:4px;top:36px" width="16" height="16" viewBox="0 0 16 16"><path d="M1.500 4.500h13v9h-13z" fill="url(#gfold)" stroke="#7A93C8"/><path d="M1 3h6l1 1.500h7V6H1z" fill="#2F6BE0"/><path d="M11.500 0v6M8.500 3h6" stroke="#2E9B38" stroke-width="1.800"/></svg><div class="nitem" style="top:38px;letter-spacing:-0.034px">New Category</div><svg style="left:4px;top:58px" width="16" height="16" viewBox="0 0 16 16"><path d="M3.500 3v10.500h3M3.500 6.500h3M3.500 10h3" fill="none" stroke="#2F6BE0"/><rect x="1.500" y="1.500" width="4" height="2" fill="#DCE6FA" stroke="#2F6BE0"/><rect x="6.500" y="5.500" width="4" height="2" fill="#DCE6FA" stroke="#2F6BE0"/><rect x="6.500" y="9" width="4" height="2" fill="#DCE6FA" stroke="#2F6BE0"/><rect x="6.500" y="12.500" width="4" height="2" fill="#DCE6FA" stroke="#2F6BE0"/><path d="M12.500 0v6M9.500 3h6" stroke="#2E9B38" stroke-width="1.800"/></svg><div class="nitem" style="top:60px;letter-spacing:-0.087px">Add Sub Category</div><svg style="left:4px;top:80px" width="16" height="16" viewBox="0 0 16 16"><path d="M1.500 4.500h13v9h-13z" fill="url(#gfold)" stroke="#7A93C8"/><path d="M1 3h6l1 1.500h7V6H1z" fill="#2F6BE0"/><path d="M4 9.500h5M4 11.500h4" stroke="#7FA2E6"/><path d="M6.500 11l1-3L14 1.500l2 2L9.500 10z" fill="#F3C26B" stroke="#C8792A" stroke-width=".7"/><path d="M13.500 2l2 2" stroke="#D2581C" stroke-width="1.600"/></svg><div class="nitem" style="top:82px;letter-spacing:-0.004px">Edit Category</div><svg style="left:4px;top:102px" width="16" height="16" viewBox="0 0 16 16"><path d="M1.500 4.500h13v9h-13z" fill="url(#gfold)" stroke="#7A93C8"/><path d="M1 3h6l1 1.500h7V6H1z" fill="#2F6BE0"/><path d="M10 8l5.500 6.500M15.500 8L10 14.500" stroke="#E2701A" stroke-width="1.600"/></svg><div class="nitem" style="top:104px;letter-spacing:-0.007px">Delete Category</div><svg style="left:4px;top:124px" width="16" height="16" viewBox="0 0 16 16"><path d="M1.500 4.500h13v9h-13z" fill="url(#gfoldg)" stroke="#B8C4DE"/><path d="M1 3h6l1 1.500h7V6H1z" fill="#9FB4DC"/><path d="M8 6.500l3 3H9.500V12h-3V9.500H5z" fill="#8FA8DC"/></svg><div class="nitem dis" style="top:126px;letter-spacing:-0.07px">Category Move Up</div><svg style="left:4px;top:146px" width="16" height="16" viewBox="0 0 16 16"><path d="M1.500 4.500h13v9h-13z" fill="url(#gfold)" stroke="#7A93C8"/><path d="M1 3h6l1 1.500h7V6H1z" fill="#2F6BE0"/><path d="M8 12.500l3-3H9.500V7h-3v2.500H5z" fill="#2F6BE0"/></svg><div class="nitem" style="top:148px;letter-spacing:-0.055px">Category Move Down</div><svg style="left:4px;top:168px" width="16" height="16" viewBox="0 0 16 16"><path d="M3.500 2l3 4H5v8H2V6H.500z" fill="#fff" stroke="#1E3F9E" stroke-width=".9"/><path d="M7.500 5h2M7.500 8h4M7.500 11h6M7.500 14h8" stroke="#2E9B38" stroke-width="1.700"/></svg><div class="nitem" style="top:170px;letter-spacing:-0.056px">Sort Categories</div><svg style="left:4px;top:190px" width="16" height="16" viewBox="0 0 16 16"><path d="M1.500 4.500h13v9h-13z" fill="url(#gfoldg)" stroke="#B8C4DE"/><path d="M1 3h6l1 1.500h7V6H1z" fill="#9FB4DC"/><path d="M4 9l3-2.500V8H10.500v2H7v1.500z" fill="#5F86D6"/></svg><div class="nitem dis" style="top:192px;letter-spacing:0.097px">Category Outdent</div><svg style="left:4px;top:212px" width="16" height="16" viewBox="0 0 16 16"><path d="M1.500 4.500h13v9h-13z" fill="url(#gfoldg)" stroke="#B8C4DE"/><path d="M1 3h6l1 1.500h7V6H1z" fill="#9FB4DC"/><path d="M12 9l-3-2.500V8H5.500v2H9v1.500z" fill="#5F86D6"/></svg><div class="nitem dis" style="top:214px;letter-spacing:0.128px">Category Indent</div><div class="nitem" style="top:236px;letter-spacing:0.052px">Set Filter by '1. Before Th...</div></div></div>
<div id="gridwrap"><div id="gby"><div class="chip"><s style="left:4px;top:2px">Category</s><svg style="left:52px;top:5px" width="8" height="8" viewBox="0 0 8 8"><path d="M0.5 7.5h7l-3.5-7z" fill="none" stroke="#ACA899"/></svg></div></div><div id="ghead"><div class="hc" style="left:0;width:70px"><s style="left:23px;top:3px;transform:scaleX(.91)">Done</s></div><div class="hc" style="left:70px;width:66px"><s style="left:33px;top:3px;transform:scaleX(.95)">Info</s><svg style="left:3px;top:2px" width="16" height="16" viewBox="0 0 16 16"><path d="M8 .3L15.700 8 8 15.700.3 8z" fill="#C6D6F8"/><path d="M8 1.600L14.400 8 8 14.400 1.600 8z" fill="#fff"/><path d="M8 3L13 8 8 13 3 8z" fill="#1C50CC"/><path d="M8 3L13 8H3z" fill="#3F74E4"/><rect x="7" y="7" width="2" height="4" fill="#fff"/><rect x="7" y="4.600" width="2" height="1.700" fill="#fff"/></svg></div><div class="hc" style="left:136px;width:429px"><s style="left:192px;top:3px">Name</s><div class="abs" style="left:411px;top:3px;width:15px;height:13px;border-radius:2px;border:1px solid #fff;background:linear-gradient(135deg,#CBD9FC 0%,#BDCFF9 55%,#B2C6F5 100%)"><svg style="left:3px;top:3px" width="7" height="5" viewBox="0 0 7 5"><path d="M.8 .8L3.500 3.500 6.200 .8" fill="none" stroke="#4D6185" stroke-width="1.800"/></svg></div></div><div class="hc" style="left:565px;width:111px"><s style="left:31px;top:3px">Priority</s><div class="abs" style="left:93px;top:3px;width:15px;height:13px;border-radius:2px;border:1px solid #fff;background:linear-gradient(135deg,#CBD9FC 0%,#BDCFF9 55%,#B2C6F5 100%)"><svg style="left:3px;top:3px" width="7" height="5" viewBox="0 0 7 5"><path d="M.8 .8L3.500 3.500 6.200 .8" fill="none" stroke="#4D6185" stroke-width="1.800"/></svg></div></div><div class="hc" style="left:676px;width:56px"><s style="left:7px;top:3px;transform:scaleX(.85)">Complete</s></div><div class="hc" style="left:732px;width:159px"><s style="left:27px;top:3px">Date Last Modified</s><div class="abs" style="left:141px;top:3px;width:15px;height:13px;border-radius:2px;border:1px solid #fff;background:linear-gradient(135deg,#CBD9FC 0%,#BDCFF9 55%,#B2C6F5 100%)"><svg style="left:3px;top:3px" width="7" height="5" viewBox="0 0 7 5"><path d="M.8 .8L3.500 3.500 6.200 .8" fill="none" stroke="#4D6185" stroke-width="1.800"/></svg></div></div></div><div id="gbody"><div class="grow first" style="top:0px"><svg style="left:3px;top:4px" width="9" height="9" viewBox="0 0 9 9"><rect x=".5" y=".5" width="8" height="8" rx="1" fill="#fff" stroke="#8EA3C6"/><path d="M2 4.500h5" stroke="#000"/></svg><s style="transform:scaleX(0.8904)">Category : 1. Before The Meeting</s></div><div class="row" style="top:18px"><i class="cb"></i><div class="c nm"><s style="transform:scaleX(0.8802)">The meeting must be left with (a decision, commitment, ideas, consensus, etc.)</s></div><div class="c pr"><svg style="left:3px;top:2px" width="16" height="16" viewBox="0 0 16 16"><circle cx="8" cy="8" r="7.800" fill="url(#gprio)"/><circle cx="8" cy="8.100" r="2.900" fill="#FDFEFF"/><circle cx="8" cy="8.100" r="3.300" fill="none" stroke="#F7C48A" stroke-width=".6"/></svg><s>Normal</s></div><div class="c cp"><s>0 %</s></div><div class="c dt"><s style="transform:scaleX(0.9018)">26.12.2005 17:32:42</s></div></div><div class="row" style="top:40px"><i class="cb"></i><div class="c nm"><s style="transform:scaleX(0.8824)">The ways to address each topic (discussion, brainstorming, planning, etc.)</s></div><div class="c pr"><svg style="left:3px;top:2px" width="16" height="16" viewBox="0 0 16 16"><circle cx="8" cy="8" r="7.800" fill="url(#gprio)"/><circle cx="8" cy="8.100" r="2.900" fill="#FDFEFF"/><circle cx="8" cy="8.100" r="3.300" fill="none" stroke="#F7C48A" stroke-width=".6"/></svg><s>Normal</s></div><div class="c cp"><s>0 %</s></div><div class="c dt"><s style="transform:scaleX(0.9018)">26.12.2005 17:32:42</s></div></div><div class="row" style="top:62px"><i class="cb"></i><div class="c nm"><s style="transform:scaleX(0.8851)">People to be present at the meeting to accomplish objective.</s></div><div class="c pr"><svg style="left:3px;top:2px" width="16" height="16" viewBox="0 0 16 16"><circle cx="8" cy="8" r="7.800" fill="url(#gprio)"/><circle cx="8" cy="8.100" r="2.900" fill="#FDFEFF"/><circle cx="8" cy="8.100" r="3.300" fill="none" stroke="#F7C48A" stroke-width=".6"/></svg><s>Normal</s></div><div class="c cp"><s>0 %</s></div><div class="c dt"><s style="transform:scaleX(0.9018)">26.12.2005 17:32:42</s></div></div><div class="row" style="top:84px"><i class="cb"></i><div class="c nm"><s style="transform:scaleX(0.8835)">The meeting be held in order to increase comfort and reduce influence.</s></div><div class="c pr"><svg style="left:3px;top:2px" width="16" height="16" viewBox="0 0 16 16"><circle cx="8" cy="8" r="7.800" fill="url(#gprio)"/><circle cx="8" cy="8.100" r="2.900" fill="#FDFEFF"/><circle cx="8" cy="8.100" r="3.300" fill="none" stroke="#F7C48A" stroke-width=".6"/></svg><s>Normal</s></div><div class="c cp"><s>0 %</s></div><div class="c dt"><s style="transform:scaleX(0.9018)">26.12.2005 17:32:42</s></div></div><div class="row" style="top:106px"><i class="cb"></i><div class="c nm"><s style="transform:scaleX(0.88)">Issues or topics of the meeting are clear to all in attendance.</s></div><div class="c pr"><svg style="left:3px;top:2px" width="16" height="16" viewBox="0 0 16 16"><circle cx="8" cy="8" r="7.800" fill="url(#gprio)"/><circle cx="8" cy="8.100" r="2.900" fill="#FDFEFF"/><circle cx="8" cy="8.100" r="3.300" fill="none" stroke="#F7C48A" stroke-width=".6"/></svg><s>Normal</s></div><div class="c cp"><s>0 %</s></div><div class="c dt"><s style="transform:scaleX(0.9018)">26.12.2005 17:33:46</s></div></div><div class="row" style="top:128px"><i class="cb"></i><div class="c nm"><s style="transform:scaleX(0.8921)">Everyone knows what decisions or actions are to be taken.</s></div><div class="c pr"><svg style="left:3px;top:2px" width="16" height="16" viewBox="0 0 16 16"><circle cx="8" cy="8" r="7.800" fill="url(#gprio)"/><circle cx="8" cy="8.100" r="2.900" fill="#FDFEFF"/><circle cx="8" cy="8.100" r="3.300" fill="none" stroke="#F7C48A" stroke-width=".6"/></svg><s>Normal</s></div><div class="c cp"><s>0 %</s></div><div class="c dt"><s style="transform:scaleX(0.9018)">26.12.2005 17:32:42</s></div></div><div class="row" style="top:150px"><i class="cb"></i><div class="c nm"><s style="transform:scaleX(0.8854)">Hidden agendas are dealt with.</s></div><div class="c pr"><svg style="left:3px;top:2px" width="16" height="16" viewBox="0 0 16 16"><circle cx="8" cy="8" r="7.800" fill="url(#gprio)"/><circle cx="8" cy="8.100" r="2.900" fill="#FDFEFF"/><circle cx="8" cy="8.100" r="3.300" fill="none" stroke="#F7C48A" stroke-width=".6"/></svg><s>Normal</s></div><div class="c cp"><s>0 %</s></div><div class="c dt"><s style="transform:scaleX(0.9018)">26.12.2005 17:32:42</s></div></div><div class="row" style="top:172px"><i class="cb"></i><div class="c nm"><s style="transform:scaleX(0.8818)">Meeting's objectives are reasonable, given available time and resources.</s></div><div class="c pr"><svg style="left:3px;top:2px" width="16" height="16" viewBox="0 0 16 16"><circle cx="8" cy="8" r="7.800" fill="url(#gprio)"/><circle cx="8" cy="8.100" r="2.900" fill="#FDFEFF"/><circle cx="8" cy="8.100" r="3.300" fill="none" stroke="#F7C48A" stroke-width=".6"/></svg><s>Normal</s></div><div class="c cp"><s>0 %</s></div><div class="c dt"><s style="transform:scaleX(0.9018)">26.12.2005 17:33:55</s></div></div><div class="row" style="top:194px"><i class="cb"></i><div class="c nm"><s style="transform:scaleX(0.8796)">The agenda is made clear by the meeting organizer.</s></div><div class="c pr"><svg style="left:3px;top:2px" width="16" height="16" viewBox="0 0 16 16"><circle cx="8" cy="8" r="7.800" fill="url(#gprio)"/><circle cx="8" cy="8.100" r="2.900" fill="#FDFEFF"/><circle cx="8" cy="8.100" r="3.300" fill="none" stroke="#F7C48A" stroke-width=".6"/></svg><s>Normal</s></div><div class="c cp"><s>0 %</s></div><div class="c dt"><s style="transform:scaleX(0.9018)">26.12.2005 17:32:42</s></div></div><div class="row" style="top:216px"><i class="cb"></i><div class="c nm"><s style="transform:scaleX(0.8843)">Participants are told of the meeting sufficiently in advance.</s></div><div class="c pr"><svg style="left:3px;top:2px" width="16" height="16" viewBox="0 0 16 16"><circle cx="8" cy="8" r="7.800" fill="url(#gprio)"/><circle cx="8" cy="8.100" r="2.900" fill="#FDFEFF"/><circle cx="8" cy="8.100" r="3.300" fill="none" stroke="#F7C48A" stroke-width=".6"/></svg><s>Normal</s></div><div class="c cp"><s>0 %</s></div><div class="c dt"><s style="transform:scaleX(0.9018)">26.12.2005 17:32:42</s></div></div><div class="row" style="top:238px"><i class="cb"></i><div class="c nm"><s style="transform:scaleX(0.8787)">All necessary materials are distributed sufficiently in advance to allow review.</s></div><div class="c pr"><svg style="left:3px;top:2px" width="16" height="16" viewBox="0 0 16 16"><circle cx="8" cy="8" r="7.800" fill="url(#gprio)"/><circle cx="8" cy="8.100" r="2.900" fill="#FDFEFF"/><circle cx="8" cy="8.100" r="3.300" fill="none" stroke="#F7C48A" stroke-width=".6"/></svg><s>Normal</s></div><div class="c cp"><s>0 %</s></div><div class="c dt"><s style="transform:scaleX(0.9018)">26.12.2005 17:32:42</s></div></div><div class="row" style="top:260px"><i class="cb"></i><div class="c nm"><s style="transform:scaleX(0.884)">The time of the meeting is convenient.</s></div><div class="c pr"><svg style="left:3px;top:2px" width="16" height="16" viewBox="0 0 16 16"><circle cx="8" cy="8" r="7.800" fill="url(#gprio)"/><circle cx="8" cy="8.100" r="2.900" fill="#FDFEFF"/><circle cx="8" cy="8.100" r="3.300" fill="none" stroke="#F7C48A" stroke-width=".6"/></svg><s>Normal</s></div><div class="c cp"><s>0 %</s></div><div class="c dt"><s style="transform:scaleX(0.9018)">26.12.2005 17:32:42</s></div></div><div class="row" style="top:282px"><i class="cb"></i><div class="c nm"><s style="transform:scaleX(0.8817)">People are reminded in advance by card or phone of date, time, purpose of meeting.</s></div><div class="c pr"><svg style="left:3px;top:2px" width="16" height="16" viewBox="0 0 16 16"><circle cx="8" cy="8" r="7.800" fill="url(#gprio)"/><circle cx="8" cy="8.100" r="2.900" fill="#FDFEFF"/><circle cx="8" cy="8.100" r="3.300" fill="none" stroke="#F7C48A" stroke-width=".6"/></svg><s>Normal</s></div><div class="c cp"><s>0 %</s></div><div class="c dt"><s style="transform:scaleX(0.9018)">26.12.2005 17:32:42</s></div></div><div class="row" style="top:304px"><i class="cb"></i><div class="c nm"><s style="transform:scaleX(0.8779)">Printed agenda is provided for each member.</s></div><div class="c pr"><svg style="left:3px;top:2px" width="16" height="16" viewBox="0 0 16 16"><circle cx="8" cy="8" r="7.800" fill="url(#gprio)"/><circle cx="8" cy="8.100" r="2.900" fill="#FDFEFF"/><circle cx="8" cy="8.100" r="3.300" fill="none" stroke="#F7C48A" stroke-width=".6"/></svg><s>Normal</s></div><div class="c cp"><s>0 %</s></div><div class="c dt"><s style="transform:scaleX(0.9018)">26.12.2005 17:32:42</s></div></div><div class="row" style="top:326px"><i class="cb"></i><div class="c nm"><s style="transform:scaleX(0.8686)">Meeting room is reserved.</s></div><div class="c pr"><svg style="left:3px;top:2px" width="16" height="16" viewBox="0 0 16 16"><circle cx="8" cy="8" r="7.800" fill="url(#gprio)"/><circle cx="8" cy="8.100" r="2.900" fill="#FDFEFF"/><circle cx="8" cy="8.100" r="3.300" fill="none" stroke="#F7C48A" stroke-width=".6"/></svg><s>Normal</s></div><div class="c cp"><s>0 %</s></div><div class="c dt"><s style="transform:scaleX(0.9018)">26.12.2005 17:32:42</s></div></div><div class="row" style="top:348px"><i class="cb"></i><div class="c nm"><s style="transform:scaleX(0.8658)">There is much time for set-up.</s></div><div class="c pr"><svg style="left:3px;top:2px" width="16" height="16" viewBox="0 0 16 16"><circle cx="8" cy="8" r="7.800" fill="url(#gprio)"/><circle cx="8" cy="8.100" r="2.900" fill="#FDFEFF"/><circle cx="8" cy="8.100" r="3.300" fill="none" stroke="#F7C48A" stroke-width=".6"/></svg><s>Normal</s></div><div class="c cp"><s>0 %</s></div><div class="c dt"><s style="transform:scaleX(0.9018)">26.12.2005 17:32:42</s></div></div><div class="row" style="top:370px"><i class="cb"></i><div class="c nm"><s style="transform:scaleX(0.8805)">Additional space for your catered functions is reserved.</s></div><div class="c pr"><svg style="left:3px;top:2px" width="16" height="16" viewBox="0 0 16 16"><circle cx="8" cy="8" r="7.800" fill="url(#gprio)"/><circle cx="8" cy="8.100" r="2.900" fill="#FDFEFF"/><circle cx="8" cy="8.100" r="3.300" fill="none" stroke="#F7C48A" stroke-width=".6"/></svg><s>Normal</s></div><div class="c cp"><s>0 %</s></div><div class="c dt"><s style="transform:scaleX(0.9018)">26.12.2005 17:32:42</s></div></div><div class="row" style="top:392px"><i class="cb"></i><div class="c nm"><s style="transform:scaleX(0.8868)">Move-out schedule once the meeting is complete.</s></div><div class="c pr"><svg style="left:3px;top:2px" width="16" height="16" viewBox="0 0 16 16"><circle cx="8" cy="8" r="7.800" fill="url(#gprio)"/><circle cx="8" cy="8.100" r="2.900" fill="#FDFEFF"/><circle cx="8" cy="8.100" r="3.300" fill="none" stroke="#F7C48A" stroke-width=".6"/></svg><s>Normal</s></div><div class="c cp"><s>0 %</s></div><div class="c dt"><s style="transform:scaleX(0.9018)">26.12.2005 17:32:42</s></div></div><div class="grow" style="top:414px"><svg style="left:3px;top:4px" width="9" height="9" viewBox="0 0 9 9"><rect x=".5" y=".5" width="8" height="8" rx="1" fill="#fff" stroke="#8EA3C6"/><path d="M2 4.500h5" stroke="#000"/></svg><s style="transform:scaleX(0.8956)">Category : 2. At The Meeting</s></div><div class="row" style="top:432px"><i class="cb"></i><div class="c nm"><s style="transform:scaleX(0.8708)">Arrive early enough to prep the meeting room and yourself.</s></div><div class="c pr"><svg style="left:3px;top:2px" width="16" height="16" viewBox="0 0 16 16"><circle cx="8" cy="8" r="7.800" fill="url(#gprio)"/><circle cx="8" cy="8.100" r="2.900" fill="#FDFEFF"/><circle cx="8" cy="8.100" r="3.300" fill="none" stroke="#F7C48A" stroke-width=".6"/></svg><s>Normal</s></div><div class="c cp"><s>0 %</s></div><div class="c dt"><s style="transform:scaleX(0.9018)">26.12.2005 17:35:53</s></div></div><div class="row" style="top:454px"><i class="cb"></i><div class="c nm"><s style="transform:scaleX(0.866)">Start the meeting on time.</s></div><div class="c pr"><svg style="left:3px;top:2px" width="16" height="16" viewBox="0 0 16 16"><circle cx="8" cy="8" r="7.800" fill="url(#gprio)"/><circle cx="8" cy="8.100" r="2.900" fill="#FDFEFF"/><circle cx="8" cy="8.100" r="3.300" fill="none" stroke="#F7C48A" stroke-width=".6"/></svg><s>Normal</s></div><div class="c cp"><s>0 %</s></div><div class="c dt"><s style="transform:scaleX(0.9018)">26.12.2005 17:35:53</s></div></div><div class="row" style="top:476px"><i class="cb"></i><div class="c nm"><s style="transform:scaleX(0.8848)">Confirm that everyone received and understood the agenda and is prepared to work.</s></div><div class="c pr"><svg style="left:3px;top:2px" width="16" height="16" viewBox="0 0 16 16"><circle cx="8" cy="8" r="7.800" fill="url(#gprio)"/><circle cx="8" cy="8.100" r="2.900" fill="#FDFEFF"/><circle cx="8" cy="8.100" r="3.300" fill="none" stroke="#F7C48A" stroke-width=".6"/></svg><s>Normal</s></div><div class="c cp"><s>0 %</s></div><div class="c dt"><s style="transform:scaleX(0.9018)">26.12.2005 17:35:53</s></div></div><div class="row" style="top:498px"><i class="cb"></i><div class="c nm"><s style="transform:scaleX(0.8842)">Introduce the first agenda topic and indicate the preferred way of addressing it.</s></div><div class="c pr"><svg style="left:3px;top:2px" width="16" height="16" viewBox="0 0 16 16"><circle cx="8" cy="8" r="7.800" fill="url(#gprio)"/><circle cx="8" cy="8.100" r="2.900" fill="#FDFEFF"/><circle cx="8" cy="8.100" r="3.300" fill="none" stroke="#F7C48A" stroke-width=".6"/></svg><s>Normal</s></div><div class="c cp"><s>0 %</s></div><div class="c dt"><s style="transform:scaleX(0.9018)">26.12.2005 17:35:53</s></div></div><div class="row" style="top:520px"><i class="cb"></i><div class="c nm"><s style="transform:scaleX(0.8747)">Alert the meeting members when agenda items are within 2 to 5 minutes of their allotted time</s></div><div class="c pr"><svg style="left:3px;top:2px" width="16" height="16" viewBox="0 0 16 16"><circle cx="8" cy="8" r="7.800" fill="url(#gprio)"/><circle cx="8" cy="8.100" r="2.900" fill="#FDFEFF"/><circle cx="8" cy="8.100" r="3.300" fill="none" stroke="#F7C48A" stroke-width=".6"/></svg><s>Normal</s></div><div class="c cp"><s>0 %</s></div><div class="c dt"><s style="transform:scaleX(0.9018)">26.12.2005 17:35:53</s></div></div><div class="row" style="top:542px"><i class="cb"></i><div class="c nm"><s style="transform:scaleX(0.884)">Use a concerns flipchart to capture unfinished business.</s></div><div class="c pr"><svg style="left:3px;top:2px" width="16" height="16" viewBox="0 0 16 16"><circle cx="8" cy="8" r="7.800" fill="url(#gprio)"/><circle cx="8" cy="8.100" r="2.900" fill="#FDFEFF"/><circle cx="8" cy="8.100" r="3.300" fill="none" stroke="#F7C48A" stroke-width=".6"/></svg><s>Normal</s></div><div class="c cp"><s>0 %</s></div><div class="c dt"><s style="transform:scaleX(0.9018)">26.12.2005 17:35:53</s></div></div><div class="row" style="top:564px"><i class="cb"></i><div class="c nm"><s style="transform:scaleX(0.8628)">Summarize &amp; confirm conclusions and commitments.</s></div><div class="c pr"><svg style="left:3px;top:2px" width="16" height="16" viewBox="0 0 16 16"><circle cx="8" cy="8" r="7.800" fill="url(#gprio)"/><circle cx="8" cy="8.100" r="2.900" fill="#FDFEFF"/><circle cx="8" cy="8.100" r="3.300" fill="none" stroke="#F7C48A" stroke-width=".6"/></svg><s>Normal</s></div><div class="c cp"><s>0 %</s></div><div class="c dt"><s style="transform:scaleX(0.9018)">26.12.2005 17:35:53</s></div></div><div class="row" style="top:586px"><i class="cb"></i><div class="c nm"><s style="transform:scaleX(0.8916)">Thank participants.</s></div><div class="c pr"><svg style="left:3px;top:2px" width="16" height="16" viewBox="0 0 16 16"><circle cx="8" cy="8" r="7.800" fill="url(#gprio)"/><circle cx="8" cy="8.100" r="2.900" fill="#FDFEFF"/><circle cx="8" cy="8.100" r="3.300" fill="none" stroke="#F7C48A" stroke-width=".6"/></svg><s>Normal</s></div><div class="c cp"><s>0 %</s></div><div class="c dt"><s style="transform:scaleX(0.9018)">26.12.2005 17:35:53</s></div></div><div class="row" style="top:608px"><i class="cb"></i><div class="c nm"><s style="transform:scaleX(0.9189)">Take notes.</s></div><div class="c pr"><svg style="left:3px;top:2px" width="16" height="16" viewBox="0 0 16 16"><circle cx="8" cy="8" r="7.800" fill="url(#gprio)"/><circle cx="8" cy="8.100" r="2.900" fill="#FDFEFF"/><circle cx="8" cy="8.100" r="3.300" fill="none" stroke="#F7C48A" stroke-width=".6"/></svg><s>Normal</s></div><div class="c cp"><s>0 %</s></div><div class="c dt"><s style="transform:scaleX(0.9018)">26.12.2005 17:35:53</s></div></div><div class="grow" style="top:630px"><svg style="left:3px;top:4px" width="9" height="9" viewBox="0 0 9 9"><rect x=".5" y=".5" width="8" height="8" rx="1" fill="#fff" stroke="#8EA3C6"/><path d="M2 4.500h5" stroke="#000"/></svg><s style="transform:scaleX(0.8901)">Category : 3. After The Meeting</s></div><div class="row" style="top:648px"><i class="cb"></i><div class="c nm"><s style="transform:scaleX(0.8645)">Complete a short, clear summary of the meeting.</s></div><div class="c pr"><svg style="left:3px;top:2px" width="16" height="16" viewBox="0 0 16 16"><circle cx="8" cy="8" r="7.800" fill="url(#gprio)"/><circle cx="8" cy="8.100" r="2.900" fill="#FDFEFF"/><circle cx="8" cy="8.100" r="3.300" fill="none" stroke="#F7C48A" stroke-width=".6"/></svg><s>Normal</s></div><div class="c cp"><s>0 %</s></div><div class="c dt"><s style="transform:scaleX(0.9018)">26.12.2005 17:36:24</s></div></div><div class="row" style="top:670px"><i class="cb"></i><div class="c nm"><s style="transform:scaleX(0.8701)">Distribute the meeting summary to every participant.</s></div><div class="c pr"><svg style="left:3px;top:2px" width="16" height="16" viewBox="0 0 16 16"><circle cx="8" cy="8" r="7.800" fill="url(#gprio)"/><circle cx="8" cy="8.100" r="2.900" fill="#FDFEFF"/><circle cx="8" cy="8.100" r="3.300" fill="none" stroke="#F7C48A" stroke-width=".6"/></svg><s>Normal</s></div><div class="c cp"><s>0 %</s></div><div class="c dt"><s style="transform:scaleX(0.9018)">26.12.2005 17:36:24</s></div></div><div class="row" style="top:692px"><i class="cb"></i><div class="c nm"><s style="transform:scaleX(0.8797)">Begin and complete all of the actions committed to during the meeting.</s></div><div class="c pr"><svg style="left:3px;top:2px" width="16" height="16" viewBox="0 0 16 16"><circle cx="8" cy="8" r="7.800" fill="url(#gprio)"/><circle cx="8" cy="8.100" r="2.900" fill="#FDFEFF"/><circle cx="8" cy="8.100" r="3.300" fill="none" stroke="#F7C48A" stroke-width=".6"/></svg><s>Normal</s></div><div class="c cp"><s>0 %</s></div><div class="c dt"><s style="transform:scaleX(0.9018)">26.12.2005 17:36:24</s></div></div><div class="row" style="top:714px"><i class="cb"></i><div class="c nm"><s style="transform:scaleX(0.8746)">Follow up with any meeting participant who made a commitment.</s></div><div class="c pr"><svg style="left:3px;top:2px" width="16" height="16" viewBox="0 0 16 16"><circle cx="8" cy="8" r="7.800" fill="url(#gprio)"/><circle cx="8" cy="8.100" r="2.900" fill="#FDFEFF"/><circle cx="8" cy="8.100" r="3.300" fill="none" stroke="#F7C48A" stroke-width=".6"/></svg><s>Normal</s></div><div class="c cp"><s>0 %</s></div><div class="c dt"><s style="transform:scaleX(0.9018)">26.12.2005 17:36:24</s></div></div><div class="row" style="top:736px"><i class="cb"></i><div class="c nm"><s style="transform:scaleX(0.8799)">Express thanks to any participants who added superior levels of value to your meeting.</s></div><div class="c pr"><svg style="left:3px;top:2px" width="16" height="16" viewBox="0 0 16 16"><circle cx="8" cy="8" r="7.800" fill="url(#gprio)"/><circle cx="8" cy="8.100" r="2.900" fill="#FDFEFF"/><circle cx="8" cy="8.100" r="3.300" fill="none" stroke="#F7C48A" stroke-width=".6"/></svg><s>Normal</s></div><div class="c cp"><s>0 %</s></div><div class="c dt"><s style="transform:scaleX(0.9018)">26.12.2005 17:36:24</s></div></div><div class="row" style="top:758px"><i class="cb"></i><div class="c nm"><s style="transform:scaleX(0.8815)">Probe any participants who were unusually quiet or who expressed reservations with topics.</s></div><div class="c pr"><svg style="left:3px;top:2px" width="16" height="16" viewBox="0 0 16 16"><circle cx="8" cy="8" r="7.800" fill="url(#gprio)"/><circle cx="8" cy="8.100" r="2.900" fill="#FDFEFF"/><circle cx="8" cy="8.100" r="3.300" fill="none" stroke="#F7C48A" stroke-width=".6"/></svg><s>Normal</s></div><div class="c cp"><s>0 %</s></div><div class="c dt"><s style="transform:scaleX(0.9018)">26.12.2005 17:36:24</s></div></div><div class="row" style="top:780px"><i class="cb"></i><div class="c nm"><s style="transform:scaleX(0.8727)">Mail out notes or action lists as appropriate.</s></div><div class="c pr"><svg style="left:3px;top:2px" width="16" height="16" viewBox="0 0 16 16"><circle cx="8" cy="8" r="7.800" fill="url(#gprio)"/><circle cx="8" cy="8.100" r="2.900" fill="#FDFEFF"/><circle cx="8" cy="8.100" r="3.300" fill="none" stroke="#F7C48A" stroke-width=".6"/></svg><s>Normal</s></div><div class="c cp"><s>0 %</s></div><div class="c dt"><s style="transform:scaleX(0.9018)">26.12.2005 17:36:24</s></div></div><div class="grow" style="top:802px"><svg style="left:3px;top:4px" width="9" height="9" viewBox="0 0 9 9"><rect x=".5" y=".5" width="8" height="8" rx="1" fill="#fff" stroke="#8EA3C6"/><path d="M2 4.500h5" stroke="#000"/></svg><s style="transform:scaleX(0.88)">Category : 4. Follow-ups</s></div></div><div id="gfoot"><div class="cnt"><s>73</s></div></div><div id="vsb"><div class="sbtn" style="top:0px"><svg style="left:2px;top:3px" width="9" height="7" viewBox="0 0 9 7"><path d="M1 5.500L4.500 2 8 5.500" fill="none" stroke="#4D6185" stroke-width="2"/></svg></div><div class="sshd" style="top:15px"></div><div class="thumb"><svg style="left:3px;top:195px" width="7" height="8" viewBox="0 0 7 8"><path d="M0 .5h6M0 2.5h6M0 4.5h6M0 6.5h6" stroke="#EEF4FE"/><path d="M1 1.500h6M1 3.500h6M1 5.500h6M1 7.500h6" stroke="#8CB0F8"/></svg></div><div class="sshd" style="top:415px"></div><div class="sbtn" style="top:871px"><svg style="left:2px;top:3px" width="9" height="7" viewBox="0 0 9 7"><path d="M1 1.500L4.500 5 8 1.500" fill="none" stroke="#4D6185" stroke-width="2"/></svg></div></div></div><div id="gtabs"><div class="tab"><span style="letter-spacing:-0.139px">Search result</span></div></div>
<div class="phead" style="left:1097px;top:87px;width:181px"><svg style="left:0px;top:0px" width="181" height="22" viewBox="0 0 181 22"><polygon points="3.5,.5 177.5,.5 180.5,3.5 180.5,18.5 177.5,21.5 3.5,21.5 .5,18.5 .5,3.5" fill="#F5F4EF" stroke="#CFCCBD"/></svg><span>Categories Bar</span><svg style="left:163px;top:3px" width="16" height="16" viewBox="0 0 16 16"><rect x=".5" y="1.500" width="13" height="13" rx="1" fill="url(#gorange)" stroke="#fff"/><path d="M4 5l6 6M10 5l-6 6" stroke="#fff" stroke-width="2.200"/></svg><svg style="left:147px;top:3px" width="16" height="16" viewBox="0 0 16 16"><path d="M4.500 3.500h5l.5 4.500 1.500 1.500h-9L4 8z" fill="#C9DAF8" stroke="#1846B8" stroke-width="1"/><path d="M3 2.500h8" stroke="#1846B8" stroke-width="1.200"/><path d="M7 10v4.500" stroke="#1846B8" stroke-width="1.400"/><path d="M7.500 4v4" stroke="#2F5FD0" stroke-width="1.500"/></svg><svg style="left:131px;top:3px" width="16" height="16" viewBox="0 0 16 16"><rect x=".5" y="1.500" width="13" height="13" rx="1.500" fill="url(#gblue)" stroke="#E8EEFB"/><rect x="3.800" y="4.800" width="6.400" height="6.400" fill="#3F74E6" stroke="#fff" stroke-width="1.600"/></svg></div><div id="cattree"><div class="abs" style="left:9px;top:9px;width:1px;height:91px;border-left:1px dotted #B4B09C"></div><div class="abs" style="left:11px;top:9px;width:8px;height:1px;border-top:1px dotted #B4B09C"></div><svg style="left:22px;top:1px" width="18" height="18" viewBox="0 0 18 18"><path d="M2.500 2.500h6v14h-6z" fill="#E9A050" stroke="#B86A1E"/><path d="M6.500 2.500h9v14h-9z" fill="#F4F6FB" stroke="#7A8598"/><path d="M8 1v3M10.500 1v3M13 1v3" stroke="#555" stroke-width="1"/><rect x="9" y="7" width="5" height="7" fill="#fff" stroke="#555" stroke-width=".7"/><path d="M10.500 9h2.500M10.500 9v2h2v2h-2.500" fill="none" stroke="#1E5F2E" stroke-width="1"/></svg><div class="abs ct" style="left:42px;top:3px;letter-spacing:-0.069px">1. Before The Meeting</div><div class="abs" style="left:11px;top:27px;width:8px;height:1px;border-top:1px dotted #B4B09C"></div><svg style="left:22px;top:19px" width="16" height="16" viewBox="0 0 16 16"><path d="M1.500 1v15" stroke="#1E3F9E" stroke-width="1.600"/><path d="M2.500 1.500c2-1 4 1 6 0s4-1 6 0v8c-2-1-4-1-6 0s-4 1-6 0z" fill="#3B78E8" stroke="#1E3F9E" stroke-width=".8"/><path d="M7 2.500v7" stroke="#BFD3F8" stroke-width="1.500"/></svg><div class="abs ct" style="left:42px;top:21px;letter-spacing:0.004px">2. At The Meeting</div><div class="abs" style="left:11px;top:45px;width:8px;height:1px;border-top:1px dotted #B4B09C"></div><svg style="left:22px;top:37px" width="16" height="16" viewBox="0 0 16 16"><path d="M.8 13.500L7 8 6.500 4.500 9.500 1.500 14 1l1.500 3-1 4-3.500 1.500-2-.5L4.500 13.500l-1 2H1.200z" fill="#F9D7A4" stroke="#E09A3C" stroke-width=".9"/><path d="M10 3.500l3.500-.5-.5 3.500z" fill="#fff" stroke="#B07A30" stroke-width=".5"/></svg><div class="abs ct" style="left:42px;top:39px;letter-spacing:0.072px">3. After The Meeting</div><div class="abs" style="left:11px;top:63px;width:8px;height:1px;border-top:1px dotted #B4B09C"></div><svg style="left:22px;top:55px" width="16" height="16" viewBox="0 0 16 16"><path d="M0 15.500L7.500 8H5.500L10 2.500 15.500 1 11.500 6h2.500z" fill="#4C88EA" stroke="#1E48B0" stroke-width=".8"/><path d="M7 7.500L10.500 3.500 13.500 2.500" stroke="#BCD4FA" stroke-width="1" fill="none"/></svg><div class="abs ct" style="left:42px;top:57px;letter-spacing:-0.102px">4. Follow-ups</div><div class="abs" style="left:11px;top:81px;width:8px;height:1px;border-top:1px dotted #B4B09C"></div><svg style="left:22px;top:73px" width="16" height="16" viewBox="0 0 16 16"><path d="M3 2c0-1 1-1.500 2-1.500h6c1 0 2 .5 2 1.500v11l-1.500 2-1.500-2H6l-1.500 2L3 13z" fill="#D9662A" stroke="#A8440E" stroke-width=".8"/><path d="M4.500 7c2 1.500 5 1.500 7 0" stroke="#FBE3D0" stroke-width="1.400" fill="none"/></svg><div class="abs ct" style="left:42px;top:75px;letter-spacing:-0.138px">5. Material Resources</div><div class="abs" style="left:11px;top:99px;width:8px;height:1px;border-top:1px dotted #B4B09C"></div><svg style="left:22px;top:91px" width="18" height="16" viewBox="0 0 18 16"><circle cx="5.500" cy="5" r="3.300" fill="#F3B46A" stroke="#C8792A" stroke-width=".7"/><path d="M0 15c0-4 2-6 5.500-6s5.500 2 5.500 6z" fill="#3B78E8"/><circle cx="12.500" cy="4.500" r="3.300" fill="#3A2A1A"/><circle cx="12.500" cy="5.500" r="2.300" fill="#E2701A"/><path d="M8.500 15c0-4 1.500-5.500 4.500-5.500s4.500 1.500 4.500 5.500z" fill="#2E9B38"/></svg><div class="abs ct" style="left:42px;top:93px;letter-spacing:-0.235px">6. Human Resources</div><div class="abs" style="left:19px;top:0px;width:160px;height:18px;border:1px dotted #000"></div></div><div class="abs" style="left:1097px;top:338px;width:183px;height:4px;background:linear-gradient(to bottom,#DAD7C8 0,#DAD7C8 3px,#fff 3px)"></div><div class="phead" style="left:1097px;top:342px;width:181px"><svg style="left:0px;top:0px" width="181" height="22" viewBox="0 0 181 22"><polygon points="3.5,.5 177.5,.5 180.5,3.5 180.5,18.5 177.5,21.5 3.5,21.5 .5,18.5 .5,3.5" fill="#D6DFF7" stroke="#CFCCBD"/></svg><span>Filters Bar</span><svg style="left:163px;top:3px" width="16" height="16" viewBox="0 0 16 16"><rect x=".5" y="1.500" width="13" height="13" rx="1" fill="url(#gorange)" stroke="#fff"/><path d="M4 5l6 6M10 5l-6 6" stroke="#fff" stroke-width="2.200"/></svg><svg style="left:147px;top:3px" width="16" height="16" viewBox="0 0 16 16"><path d="M4.500 3.500h5l.5 4.500 1.500 1.500h-9L4 8z" fill="#C9DAF8" stroke="#1846B8" stroke-width="1"/><path d="M3 2.500h8" stroke="#1846B8" stroke-width="1.200"/><path d="M7 10v4.500" stroke="#1846B8" stroke-width="1.400"/><path d="M7.500 4v4" stroke="#2F5FD0" stroke-width="1.500"/></svg><svg style="left:131px;top:3px" width="16" height="16" viewBox="0 0 16 16"><rect x=".5" y="1.500" width="13" height="13" rx="1.500" fill="url(#gblue)" stroke="#E8EEFB"/><rect x="3.800" y="4.800" width="6.400" height="6.400" fill="#3F74E6" stroke="#fff" stroke-width="1.600"/></svg></div><div id="filt"><b class="abs" style="left:9px;top:9px;white-space:nowrap;letter-spacing:0.224px">Filter By Done:</b><div class="abs fcombo" style="left:8px;top:26px;width:121px;height:21px"><span>All</span><div class="abs" style="left:102px;top:1px;width:17px;height:17px;border-radius:2px;border:1px solid #B7CBF5;background:linear-gradient(135deg,#D9E4FD 0%,#C0D2FA 50%,#AEC3F4 100%)"><svg style="left:3px;top:5px" width="9" height="6" viewBox="0 0 9 6"><path d="M1 1l3.5 3.5L8 1" fill="none" stroke="#4D6185" stroke-width="2"/></svg></div></div><b class="abs" style="left:9px;top:57px;white-space:nowrap;letter-spacing:0.315px">Filter By Due Date:</b><svg style="left:11px;top:82px" width="4" height="7" viewBox="0 0 4 7"><path d="M4 0v7L0 3.500z" fill="#000"/></svg><svg style="left:145px;top:82px" width="4" height="7" viewBox="0 0 4 7"><path d="M0 0v7l4-3.500z" fill="#000"/></svg><div class="abs" style="left:43px;top:80px;white-space:nowrap;letter-spacing:0.09px">Декабрь 2005</div><div class="abs" style="left:5px;top:94px;width:151px;height:1px;background:#000"></div><div class="abs cd" style="left:15px;top:97px">П</div><div class="abs cd" style="left:33px;top:97px">В</div><div class="abs cd" style="left:51px;top:97px">С</div><div class="abs cd" style="left:69px;top:97px">Ч</div><div class="abs cd" style="left:87px;top:97px">П</div><div class="abs cd" style="left:105px;top:97px">С</div><div class="abs cd" style="left:123px;top:97px">В</div><div class="abs" style="left:17px;top:110px;width:126px;height:1px;background:#ACA899"></div><div class="abs selbox" style="left:17px;top:172px"></div><div class="abs cd g" style="left:15px;top:114px">28</div><div class="abs cd g" style="left:33px;top:114px">29</div><div class="abs cd g" style="left:51px;top:114px">30</div><div class="abs cd" style="left:69px;top:114px">1</div><div class="abs cd" style="left:87px;top:114px">2</div><div class="abs cd" style="left:105px;top:114px">3</div><div class="abs cd" style="left:123px;top:114px">4</div><div class="abs cd" style="left:15px;top:129px">5</div><div class="abs cd" style="left:33px;top:129px">6</div><div class="abs cd" style="left:51px;top:129px">7</div><div class="abs cd" style="left:69px;top:129px">8</div><div class="abs cd" style="left:87px;top:129px">9</div><div class="abs cd" style="left:105px;top:129px">10</div><div class="abs cd" style="left:123px;top:129px">11</div><div class="abs cd" style="left:15px;top:144px">12</div><div class="abs cd" style="left:33px;top:144px">13</div><div class="abs cd" style="left:51px;top:144px">14</div><div class="abs cd" style="left:69px;top:144px">15</div><div class="abs cd" style="left:87px;top:144px">16</div><div class="abs cd" style="left:105px;top:144px">17</div><div class="abs cd" style="left:123px;top:144px">18</div><div class="abs cd" style="left:15px;top:159px">19</div><div class="abs cd" style="left:33px;top:159px">20</div><div class="abs cd" style="left:51px;top:159px">21</div><div class="abs cd" style="left:69px;top:159px">22</div><div class="abs cd" style="left:87px;top:159px">23</div><div class="abs cd" style="left:105px;top:159px">24</div><div class="abs cd" style="left:123px;top:159px">25</div><div class="abs cd sel" style="left:15px;top:174px">26</div><div class="abs cd" style="left:33px;top:174px">27</div><div class="abs cd" style="left:51px;top:174px">28</div><div class="abs cd" style="left:69px;top:174px">29</div><div class="abs cd" style="left:87px;top:174px">30</div><div class="abs cd" style="left:105px;top:174px">31</div><div class="abs cd g" style="left:123px;top:174px">1</div><div class="abs cd g" style="left:15px;top:189px">2</div><div class="abs cd g" style="left:33px;top:189px">3</div><div class="abs cd g" style="left:51px;top:189px">4</div><div class="abs cd g" style="left:69px;top:189px">5</div><div class="abs cd g" style="left:87px;top:189px">6</div><div class="abs cd g" style="left:105px;top:189px">7</div><div class="abs cd g" style="left:123px;top:189px">8</div><div class="abs" style="left:17px;top:202px;width:126px;height:1px;background:#ACA899"></div><div class="abs fbtn" style="left:24px;top:208px"><span style="letter-spacing:0.734px">Today</span></div><div class="abs fbtn" style="left:90px;top:208px"><span style="letter-spacing:0.294px">Clear</span></div><div class="abs fcombo" style="left:8px;top:242px;width:145px;height:21px"><span style="letter-spacing:-0.055px">is less than or equal to</span><div class="abs" style="left:126px;top:1px;width:17px;height:17px;border-radius:2px;border:1px solid #B7CBF5;background:linear-gradient(135deg,#D9E4FD 0%,#C0D2FA 50%,#AEC3F4 100%)"><svg style="left:3px;top:5px" width="9" height="6" viewBox="0 0 9 6"><path d="M1 1l3.5 3.5L8 1" fill="none" stroke="#4D6185" stroke-width="2"/></svg></div></div></div>
<div class="abs" style="left:0;top:86px;width:2px;height:916px;border-left:1px solid #D1CEBF;background:#FDFDFB"></div><div class="abs" style="left:1278px;top:86px;width:2px;height:916px;border-right:1px solid #D4D1C2;background:#FCFBF7"></div><div id="edge"></div><div id="status"></div><div id="desk"></div>
</div>
</body></html>
